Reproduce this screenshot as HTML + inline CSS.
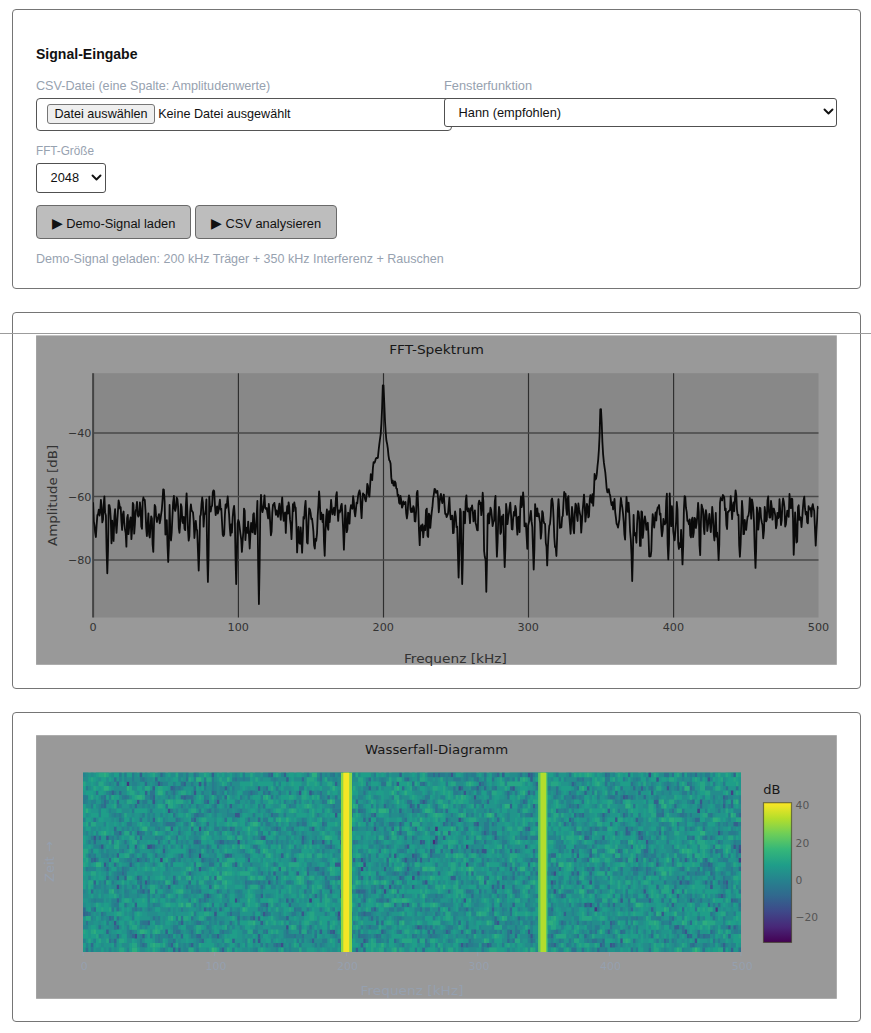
<!DOCTYPE html>
<html lang="de">
<head>
<meta charset="utf-8">
<title>FFT-Spektrum Analyse</title>
<style>
*{box-sizing:border-box}
html,body{margin:0;padding:0;background:#fff}
body{width:871px;height:1033px;position:relative;overflow:hidden;font-family:"Liberation Sans",sans-serif;color:#111}
.card{position:absolute;left:12px;width:849px;border:1px solid #757575;border-radius:4px;background:#fff}
#c1{top:9px;height:280px}
#c2{top:312px;height:377px}
#c3{top:712px;height:310px}
.hair{position:absolute;left:0;top:333px;width:871px;height:1px;background:#9c9c9c}
h2{position:absolute;left:23px;top:35.2px;margin:0;font-size:15px;line-height:18px;font-weight:bold;color:#111;white-space:nowrap;transform-origin:0 50%}
label,.status{position:absolute;margin:0;font-size:13px;line-height:16px;color:#97a2b0;white-space:nowrap;transform-origin:0 50%}
.file{position:absolute;left:23px;top:88px;width:416px;height:33px;border:1px solid #555;border-radius:4px;background:#fff;font-size:12.6px}
.fbtn{position:absolute;left:10px;top:5px;width:108px;height:20px;border:1px solid #767676;border-radius:3px;background:#efefef;color:#111;font-size:12.6px;line-height:18.6px;text-align:center;white-space:nowrap}
.ftxt{position:absolute;left:121.2px;top:5px;line-height:21.4px;color:#111;white-space:nowrap}
.sel{position:absolute;border:1px solid #505050;border-radius:3px;background:#fff;font-size:12.8px;color:#111;white-space:nowrap}
.sel span{position:absolute;left:13.6px;top:0}
.sel svg{position:absolute}
.btn{position:absolute;top:195px;height:34px;border:1px solid #6a6a6a;border-radius:4px;background:#bdbdbd;color:#111;font-size:12.85px;line-height:32px;text-align:center;white-space:nowrap;padding:1.6px 0 0 0;font-family:inherit}
.btn i{font-style:normal;font-size:13.7px;line-height:1}
.chart{position:absolute;display:block}
.chart text{font-family:"DejaVu Sans","Liberation Sans",sans-serif}
</style>
</head>
<body>
<div class="card" id="c1">
  <h2 style="transform:scaleX(.937)">Signal-Eingabe</h2>
  <label style="left:23px;top:68px;transform:scaleX(.9706)" id="l1">CSV-Datei (eine Spalte: Amplitudenwerte)</label>
  <div class="file"><div class="fbtn">Datei auswählen</div><div class="ftxt">Keine Datei ausgewählt</div></div>
  <label style="left:431px;top:68px;transform:scaleX(.982)" id="l2">Fensterfunktion</label>
  <div class="sel" style="left:431px;top:88px;width:393px;height:29px;line-height:27.4px"><span>Hann (empfohlen)</span>
    <svg style="right:2px;top:9px" width="11" height="8" viewBox="0 0 11 8"><path d="M1.5 1.5 L5.5 5.5 L9.5 1.5" fill="none" stroke="#111" stroke-width="1.9" stroke-linecap="round" stroke-linejoin="round"/></svg></div>
  <label style="left:23px;top:133px;transform:scaleX(.902)" id="l3">FFT-Größe</label>
  <div class="sel" style="left:23px;top:153px;width:70px;height:30px;line-height:28px"><span>2048</span>
    <svg style="right:2.6px;top:9.6px" width="11" height="8" viewBox="0 0 11 8"><path d="M1.5 1.5 L5.5 5.5 L9.5 1.5" fill="none" stroke="#111" stroke-width="1.9" stroke-linecap="round" stroke-linejoin="round"/></svg></div>
  <button class="btn" style="left:23px;width:155px"><i>▶</i> Demo-Signal laden</button>
  <button class="btn" style="left:182px;width:142px"><i>▶</i> CSV analysieren</button>
  <div class="status" style="left:23px;top:240.5px;transform:scaleX(.9643)" id="st">Demo-Signal geladen: 200 kHz Träger + 350 kHz Interferenz + Rauschen</div>
</div>
<div class="card" id="c2"></div>
<div class="card" id="c3"></div>
<div class="hair"></div>
<svg class="chart" style="left:36px;top:335px" width="802" height="331" viewBox="36 335 802 331">
<rect x="36.1" y="335.4" width="800.7" height="329.4" fill="#999"/>
<rect x="93.1" y="373.2" width="725.4" height="244.3" fill="#888"/>
<path d="M238.4 373.2V617.5M383.5 373.2V617.5M528.5 373.2V617.5M673.6 373.2V617.5" stroke="#2e2e2e" stroke-width="1.15" fill="none"/>
<path d="M93.1 433.0H818.5M93.1 496.5H818.5M93.1 560.0H818.5" stroke="#484848" stroke-width="1.6" fill="none"/>
<path d="M93.1 373.2V617.5" stroke="#444" stroke-width="2" fill="none"/>
<clipPath id="cp1"><rect x="93.1" y="373.2" width="725.4" height="244.3"/></clipPath>
<polyline clip-path="url(#cp1)" points="93.1,502.3 93.8,521.3 94.5,525.7 95.2,532.9 95.9,537.0 96.6,525.4 97.4,514.9 98.1,513.9 98.8,509.6 99.5,515.6 100.2,512.0 100.9,499.8 101.6,507.9 102.3,522.4 103.0,519.6 103.7,504.5 104.4,496.4 105.1,512.4 105.9,515.6 106.6,550.8 107.3,573.3 108.0,550.8 108.7,505.1 109.4,505.2 110.1,508.8 110.8,519.6 111.5,543.3 112.2,520.6 112.9,530.7 113.6,540.9 114.4,516.4 115.1,509.2 115.8,523.5 116.5,532.9 117.2,522.2 117.9,511.7 118.6,500.5 119.3,503.8 120.0,508.7 120.7,507.3 121.4,520.9 122.1,530.0 122.9,514.3 123.6,511.5 124.3,523.2 125.0,529.5 125.7,533.1 126.4,546.7 127.1,518.2 127.8,515.0 128.5,534.1 129.2,527.0 129.9,521.2 130.6,517.4 131.4,539.1 132.1,529.2 132.8,502.9 133.5,504.8 134.2,533.7 134.9,524.4 135.6,511.3 136.3,508.7 137.0,501.8 137.7,514.9 138.4,516.6 139.1,515.1 139.9,502.3 140.6,508.7 141.3,526.4 142.0,528.8 142.7,501.3 143.4,497.5 144.1,500.1 144.8,500.0 145.5,510.8 146.2,527.8 146.9,536.1 147.6,525.7 148.4,513.4 149.1,534.8 149.8,537.5 150.5,526.4 151.2,516.3 151.9,518.5 152.6,544.5 153.3,551.9 154.0,524.2 154.7,505.0 155.4,506.7 156.1,515.9 156.9,522.0 157.6,518.9 158.3,516.6 159.0,514.1 159.7,523.3 160.4,519.9 161.1,514.7 161.8,509.8 162.5,500.6 163.2,489.4 163.9,489.8 164.6,501.3 165.4,534.5 166.1,532.0 166.8,520.2 167.5,545.1 168.2,561.9 168.9,545.1 169.6,504.9 170.3,532.3 171.0,540.5 171.7,532.3 172.4,517.1 173.1,502.5 173.9,496.0 174.6,508.8 175.3,510.9 176.0,507.0 176.7,497.7 177.4,499.1 178.1,506.8 178.8,528.2 179.5,532.8 180.2,523.5 180.9,504.2 181.6,507.0 182.4,521.4 183.1,523.1 183.8,517.0 184.5,528.8 185.2,530.1 185.9,505.1 186.6,493.3 187.3,510.2 188.0,529.8 188.7,540.7 189.4,536.0 190.2,511.6 190.9,504.3 191.6,510.3 192.3,511.5 193.0,512.4 193.7,520.9 194.4,538.0 195.1,529.5 195.8,520.9 196.5,528.4 197.2,530.8 197.9,549.4 198.7,570.5 199.4,549.4 200.1,516.3 200.8,514.6 201.5,504.2 202.2,497.5 202.9,502.5 203.6,526.7 204.3,514.9 205.0,513.8 205.7,510.0 206.4,499.4 207.2,555.1 207.9,581.9 208.6,555.1 209.3,496.7 210.0,509.2 210.7,511.5 211.4,506.9 212.1,505.7 212.8,492.4 213.5,490.4 214.2,491.2 214.9,504.8 215.7,515.1 216.4,508.8 217.1,506.3 217.8,513.6 218.5,511.1 219.2,504.9 219.9,499.6 220.6,509.5 221.3,508.7 222.0,521.7 222.7,534.5 223.4,536.0 224.2,534.3 224.9,515.0 225.6,504.5 226.3,507.9 227.0,502.9 227.7,496.5 228.4,506.4 229.1,514.5 229.8,527.8 230.5,535.6 231.2,524.3 231.9,532.6 232.7,517.1 233.4,509.7 234.1,505.8 234.8,516.4 235.5,556.2 236.2,584.1 236.9,556.2 237.6,523.7 238.3,520.0 239.0,521.9 239.7,527.6 240.4,533.5 241.2,539.3 241.9,551.9 242.6,541.4 243.3,532.2 244.0,508.6 244.7,510.7 245.4,540.1 246.1,530.5 246.8,527.6 247.5,532.9 248.2,521.6 248.9,533.6 249.7,548.5 250.4,534.3 251.1,522.8 251.8,525.8 252.5,532.4 253.2,514.5 253.9,513.2 254.6,533.9 255.3,534.0 256.0,525.7 256.7,516.3 257.4,501.0 258.2,566.2 258.9,604.1 259.6,566.2 260.3,510.2 261.0,494.9 261.7,507.1 262.4,512.2 263.1,509.2 263.8,503.8 264.5,495.3 265.2,507.9 265.9,508.9 266.7,508.0 267.4,513.3 268.1,518.5 268.8,503.9 269.5,511.0 270.2,523.2 270.9,535.3 271.6,531.6 272.3,512.8 273.0,504.9 273.7,504.2 274.4,502.9 275.2,509.0 275.9,514.8 276.6,510.5 277.3,512.3 278.0,516.8 278.7,508.7 279.4,503.6 280.1,513.8 280.8,519.9 281.5,505.5 282.2,497.4 283.0,512.8 283.7,520.9 284.4,514.0 285.1,512.5 285.8,532.9 286.5,515.4 287.2,506.2 287.9,513.6 288.6,502.4 289.3,507.1 290.0,519.4 290.7,524.6 291.5,539.1 292.2,522.4 292.9,504.2 293.6,511.1 294.3,502.5 295.0,506.8 295.7,507.8 296.4,524.6 297.1,552.4 297.8,538.5 298.5,526.9 299.2,542.7 300.0,543.8 300.7,527.5 301.4,538.1 302.1,552.6 302.8,536.1 303.5,516.8 304.2,518.6 304.9,506.8 305.6,500.9 306.3,518.1 307.0,542.5 307.7,543.6 308.5,521.7 309.2,508.4 309.9,509.5 310.6,512.9 311.3,519.1 312.0,518.4 312.7,524.0 313.4,531.5 314.1,545.4 314.8,548.6 315.5,538.9 316.2,540.9 317.0,533.7 317.7,515.7 318.4,505.1 319.1,491.3 319.8,500.5 320.5,519.3 321.2,512.7 321.9,515.7 322.6,522.2 323.3,514.7 324.0,542.0 324.7,555.8 325.5,529.9 326.2,516.6 326.9,509.4 327.6,526.5 328.3,529.8 329.0,511.2 329.7,522.1 330.4,512.8 331.1,499.9 331.8,508.4 332.5,514.3 333.2,509.8 334.0,507.8 334.7,515.2 335.4,507.5 336.1,495.6 336.8,492.2 337.5,510.0 338.2,520.9 338.9,510.3 339.6,512.5 340.3,511.0 341.0,506.0 341.7,503.9 342.5,515.8 343.2,530.8 343.9,549.7 344.6,530.2 345.3,505.5 346.0,518.4 346.7,532.2 347.4,529.6 348.1,512.6 348.8,514.5 349.5,523.7 350.2,510.5 351.0,505.2 351.7,506.9 352.4,508.7 353.1,496.2 353.8,501.2 354.5,511.7 355.2,516.4 355.9,510.0 356.6,502.7 357.3,503.4 358.0,496.7 358.7,493.0 359.5,490.4 360.2,493.8 360.9,508.0 361.6,518.1 362.3,503.1 363.0,493.4 363.7,494.3 364.4,495.0 365.1,499.2 365.8,501.3 366.5,496.4 367.3,483.8 368.0,486.1 368.7,494.3 369.4,496.7 370.1,486.0 370.8,474.1 371.5,477.6 372.2,480.1 372.9,468.1 373.6,462.2 374.3,462.9 375.0,461.8 375.8,458.8 376.5,457.9 377.2,458.1 377.9,457.7 378.6,450.5 379.3,444.4 380.0,439.0 380.7,434.1 381.4,423.6 382.1,407.9 382.8,385.4 383.5,385.4 384.3,403.6 385.0,421.0 385.7,432.2 386.4,440.5 387.1,443.7 387.8,448.4 388.5,455.6 389.2,460.0 389.9,461.0 390.6,463.8 391.3,477.4 392.0,483.1 392.8,480.6 393.5,485.4 394.2,485.7 394.9,481.4 395.6,482.9 396.3,488.5 397.0,488.8 397.7,496.0 398.4,494.7 399.1,502.7 399.8,503.9 400.5,495.8 401.3,501.0 402.0,507.7 402.7,506.0 403.4,501.5 404.1,504.2 404.8,503.6 405.5,502.0 406.2,513.4 406.9,518.5 407.6,513.5 408.3,500.4 409.0,495.5 409.8,498.4 410.5,509.6 411.2,512.2 411.9,508.4 412.6,511.9 413.3,506.1 414.0,508.1 414.7,521.2 415.4,521.5 416.1,511.6 416.8,493.1 417.5,490.8 418.3,509.3 419.0,530.9 419.7,545.2 420.4,529.2 421.1,525.3 421.8,530.5 422.5,524.5 423.2,537.4 423.9,530.5 424.6,525.7 425.3,530.1 426.0,510.1 426.8,508.6 427.5,535.8 428.2,537.0 428.9,513.6 429.6,515.5 430.3,527.9 431.0,519.5 431.7,512.4 432.4,507.2 433.1,498.6 433.8,494.6 434.5,489.0 435.3,489.4 436.0,492.8 436.7,491.6 437.4,490.9 438.1,498.5 438.8,512.3 439.5,502.9 440.2,496.9 440.9,493.9 441.6,499.6 442.3,503.0 443.0,498.7 443.8,494.6 444.5,505.1 445.2,514.0 445.9,513.7 446.6,517.1 447.3,515.3 448.0,513.9 448.7,505.6 449.4,497.6 450.1,512.8 450.8,519.4 451.5,516.0 452.3,515.7 453.0,533.1 453.7,532.8 454.4,517.8 455.1,511.3 455.8,516.4 456.5,527.1 457.2,526.5 457.9,552.9 458.6,577.5 459.3,552.9 460.1,508.8 460.8,512.0 461.5,556.2 462.2,584.1 462.9,556.2 463.6,511.6 464.3,517.7 465.0,523.3 465.7,501.0 466.4,495.3 467.1,509.3 467.8,511.4 468.6,508.4 469.3,513.1 470.0,523.2 470.7,508.1 471.4,509.7 472.1,505.4 472.8,512.0 473.5,521.4 474.2,515.1 474.9,510.3 475.6,522.9 476.3,525.6 477.1,530.2 477.8,530.3 478.5,503.7 479.2,500.6 479.9,504.1 480.6,502.7 481.3,515.2 482.0,507.5 482.7,492.7 483.4,502.0 484.1,551.0 484.8,556.8 485.6,560.0 486.3,591.8 487.0,560.0 487.7,515.6 488.4,513.3 489.1,523.4 489.8,515.5 490.5,507.7 491.2,510.0 491.9,517.0 492.6,526.1 493.3,522.5 494.1,520.6 494.8,501.5 495.5,496.0 496.2,534.2 496.9,556.7 497.6,541.9 498.3,517.4 499.0,507.0 499.7,511.1 500.4,533.8 501.1,532.1 501.8,516.4 502.6,524.4 503.3,514.7 504.0,547.6 504.7,567.0 505.4,547.6 506.1,504.0 506.8,510.0 507.5,524.1 508.2,517.3 508.9,513.3 509.6,507.4 510.3,502.6 511.1,515.6 511.8,529.2 512.5,529.5 513.2,518.1 513.9,511.9 514.6,515.7 515.3,505.9 516.0,509.2 516.7,524.7 517.4,534.6 518.1,517.2 518.8,516.7 519.6,532.1 520.3,506.9 521.0,496.3 521.7,507.0 522.4,503.3 523.1,492.4 523.8,501.1 524.5,526.1 525.2,526.4 525.9,523.3 526.6,535.9 527.3,548.8 528.1,525.5 528.8,522.7 529.5,520.7 530.2,515.2 530.9,510.8 531.6,521.4 532.3,527.2 533.0,548.9 533.7,569.5 534.4,548.9 535.1,504.1 535.8,511.7 536.6,516.1 537.3,508.3 538.0,516.3 538.7,513.6 539.4,518.1 540.1,522.8 540.8,538.7 541.5,532.2 542.2,511.1 542.9,512.9 543.6,520.9 544.3,523.4 545.1,524.0 545.8,542.8 546.5,546.8 547.2,565.4 547.9,546.8 548.6,534.7 549.3,525.8 550.0,524.0 550.7,515.8 551.4,500.1 552.1,498.5 552.9,504.2 553.6,518.4 554.3,537.3 555.0,547.0 555.7,546.9 556.4,556.0 557.1,538.7 557.8,510.3 558.5,499.1 559.2,509.6 559.9,527.9 560.6,526.3 561.4,527.3 562.1,517.2 562.8,515.8 563.5,502.6 564.2,492.0 564.9,493.7 565.6,493.9 566.3,508.6 567.0,514.9 567.7,498.2 568.4,496.2 569.1,514.1 569.9,524.3 570.6,533.8 571.3,519.6 572.0,507.0 572.7,514.1 573.4,529.2 574.1,533.3 574.8,513.7 575.5,503.7 576.2,505.4 576.9,515.4 577.6,521.0 578.4,503.5 579.1,509.2 579.8,513.1 580.5,516.0 581.2,532.6 581.9,522.5 582.6,511.2 583.3,502.8 584.0,494.6 584.7,505.2 585.4,521.7 586.1,514.3 586.9,503.8 587.6,506.2 588.3,517.4 589.0,516.3 589.7,500.3 590.4,495.2 591.1,501.6 591.8,502.7 592.5,494.1 593.2,505.8 593.9,492.9 594.6,473.9 595.4,479.6 596.1,478.5 596.8,474.2 597.5,466.0 598.2,459.6 598.9,449.7 599.6,435.5 600.3,409.4 601.0,409.2 601.7,422.5 602.4,442.0 603.1,454.1 603.9,462.7 604.6,467.7 605.3,472.3 606.0,480.0 606.7,488.7 607.4,492.4 608.1,491.7 608.8,489.1 609.5,493.5 610.2,495.6 610.9,501.4 611.6,505.1 612.4,502.2 613.1,509.5 613.8,504.3 614.5,498.8 615.2,512.1 615.9,517.7 616.6,523.8 617.3,525.0 618.0,527.6 618.7,523.6 619.4,519.5 620.1,508.4 620.9,497.9 621.6,503.2 622.3,507.3 623.0,513.3 623.7,521.8 624.4,534.3 625.1,539.7 625.8,514.8 626.5,496.9 627.2,506.0 627.9,511.9 628.6,502.7 629.4,515.3 630.1,531.5 630.8,539.1 631.5,554.6 632.2,581.0 632.9,554.6 633.6,514.9 634.3,535.4 635.0,532.8 635.7,534.1 636.4,542.8 637.1,524.0 637.9,511.2 638.6,512.0 639.3,519.4 640.0,545.9 640.7,545.9 641.4,511.4 642.1,512.1 642.8,537.9 643.5,529.7 644.2,520.1 644.9,516.3 645.7,521.9 646.4,529.8 647.1,524.7 647.8,522.8 648.5,535.8 649.2,556.4 649.9,556.5 650.6,556.3 651.3,551.2 652.0,527.5 652.7,514.1 653.4,519.6 654.2,527.7 654.9,518.4 655.6,512.3 656.3,520.5 657.0,510.8 657.7,507.4 658.4,507.2 659.1,505.0 659.8,514.7 660.5,513.6 661.2,527.3 661.9,536.3 662.7,530.7 663.4,518.9 664.1,524.0 664.8,524.4 665.5,523.1 666.2,501.1 666.9,493.7 667.6,543.8 668.3,559.4 669.0,543.8 669.7,493.3 670.4,511.0 671.2,526.1 671.9,506.1 672.6,513.7 673.3,531.7 674.0,536.9 674.7,540.3 675.4,530.9 676.1,521.6 676.8,502.0 677.5,509.7 678.2,543.0 678.9,549.0 679.7,543.2 680.4,547.2 681.1,529.8 681.8,546.3 682.5,564.4 683.2,546.3 683.9,509.5 684.6,496.1 685.3,497.1 686.0,508.0 686.7,511.9 687.4,520.9 688.2,521.2 688.9,524.3 689.6,519.3 690.3,535.5 691.0,537.3 691.7,519.7 692.4,517.7 693.1,537.2 693.8,532.3 694.5,517.8 695.2,518.9 695.9,528.0 696.7,523.2 697.4,514.8 698.1,502.9 698.8,512.2 699.5,545.5 700.2,555.1 700.9,522.2 701.6,504.6 702.3,507.4 703.0,509.6 703.7,526.3 704.4,534.1 705.2,514.4 705.9,510.1 706.6,515.1 707.3,531.0 708.0,525.4 708.7,520.2 709.4,513.9 710.1,524.2 710.8,532.1 711.5,521.8 712.2,506.8 712.9,514.8 713.7,532.8 714.4,540.5 715.1,528.1 715.8,512.9 716.5,536.6 717.2,532.6 717.9,544.1 718.6,560.0 719.3,544.1 720.0,502.9 720.7,497.9 721.4,498.9 722.2,500.4 722.9,494.9 723.6,495.9 724.3,497.7 725.0,510.1 725.7,508.5 726.4,525.0 727.1,529.0 727.8,511.8 728.5,511.9 729.2,510.4 730.0,509.9 730.7,496.1 731.4,505.7 732.1,519.2 732.8,507.6 733.5,502.3 734.2,511.3 734.9,499.4 735.6,490.3 736.3,495.2 737.0,510.1 737.7,515.2 738.5,514.9 739.2,545.5 739.9,556.8 740.6,544.4 741.3,522.2 742.0,501.0 742.7,510.7 743.4,534.1 744.1,534.0 744.8,520.0 745.5,528.1 746.2,529.8 747.0,521.1 747.7,516.5 748.4,515.9 749.1,511.2 749.8,497.9 750.5,502.9 751.2,518.6 751.9,499.3 752.6,502.7 753.3,509.4 754.0,522.0 754.7,548.1 755.5,567.9 756.2,548.1 756.9,507.5 757.6,513.0 758.3,529.6 759.0,521.1 759.7,507.7 760.4,508.3 761.1,518.5 761.8,522.2 762.5,525.1 763.2,538.3 764.0,530.4 764.7,507.0 765.4,513.5 766.1,521.4 766.8,519.6 767.5,500.5 768.2,496.3 768.9,511.5 769.6,517.6 770.3,517.5 771.0,500.8 771.7,506.3 772.5,519.7 773.2,508.6 773.9,508.7 774.6,511.7 775.3,515.8 776.0,528.3 776.7,525.1 777.4,512.9 778.1,518.3 778.8,517.1 779.5,499.2 780.2,510.5 781.0,525.0 781.7,520.4 782.4,504.5 783.1,498.5 783.8,501.7 784.5,507.5 785.2,526.5 785.9,524.4 786.6,516.9 787.3,510.6 788.0,514.1 788.7,516.9 789.5,494.0 790.2,506.1 790.9,508.2 791.6,498.6 792.3,499.0 793.0,518.1 793.7,554.8 794.4,536.9 795.1,512.5 795.8,524.4 796.5,542.5 797.2,541.4 798.0,507.0 798.7,505.3 799.4,519.9 800.1,517.0 800.8,517.9 801.5,527.1 802.2,518.3 802.9,508.1 803.6,500.2 804.3,496.7 805.0,508.2 805.7,514.5 806.5,511.8 807.2,522.5 807.9,523.3 808.6,506.1 809.3,509.6 810.0,508.4 810.7,508.1 811.4,516.6 812.1,506.9 812.8,504.1 813.5,508.6 814.2,510.7 815.0,529.7 815.7,545.7 816.4,531.2 817.1,520.0 817.8,506.7 818.5,509.1" fill="none" stroke="#0a0a0a" stroke-width="1.8" stroke-linejoin="round"/>
<text x="436.6" y="353.8" font-size="13" fill="#171717" text-anchor="middle" textLength="94.8" lengthAdjust="spacingAndGlyphs">FFT-Spektrum</text>
<text x="93.1" y="630.7" font-size="11.2" fill="#333" text-anchor="middle">0</text>
<text x="238.2" y="630.7" font-size="11.2" fill="#333" text-anchor="middle">100</text>
<text x="383.3" y="630.7" font-size="11.2" fill="#333" text-anchor="middle">200</text>
<text x="528.3" y="630.7" font-size="11.2" fill="#333" text-anchor="middle">300</text>
<text x="673.4" y="630.7" font-size="11.2" fill="#333" text-anchor="middle">400</text>
<text x="818.5" y="630.7" font-size="11.2" fill="#333" text-anchor="middle">500</text>
<text x="91.5" y="437.0" font-size="11.2" fill="#333" text-anchor="end">−40</text>
<text x="91.5" y="500.5" font-size="11.2" fill="#333" text-anchor="end">−60</text>
<text x="91.5" y="564.0" font-size="11.2" fill="#333" text-anchor="end">−80</text>
<text x="455.4" y="662.5" font-size="13" fill="#333" text-anchor="middle" textLength="103" lengthAdjust="spacingAndGlyphs">Frequenz [kHz]</text>
<text transform="translate(56.5 495.4) rotate(-90)" font-size="13" fill="#333" text-anchor="middle" textLength="101.3" lengthAdjust="spacingAndGlyphs">Amplitude [dB]</text>
</svg>
<svg class="chart" style="left:36px;top:735px" width="802" height="265" viewBox="36 735 802 265">
<rect x="36.1" y="735.2" width="800.7" height="263.6" fill="#999"/>
<defs><clipPath id="cp3"><rect x="83.1" y="772.7" width="657.9" height="179.3"/></clipPath></defs>
<rect x="83.1" y="772.7" width="657.9" height="179.3" fill="#23988b"/>
<g transform="translate(83.1 772.7) scale(2.56992 4.48250)" shape-rendering="geometricPrecision">
<rect width="256" height="40" fill="#21958b"/>
<path d="M136 15.5h1" stroke="#472c7a" stroke-width="1.02" fill="none"/>
<path d="M17 2.5h1M137 12.5h1M199 30.5h1M246 30.5h1" stroke="#443780" stroke-width="1.02" fill="none"/>
<path d="M252 4.5h1M239 8.5h1M149 16.5h1M45 18.5h1M30 19.5h1M255 19.5h1M108 21.5h1M88 28.5h1" stroke="#404185" stroke-width="1.02" fill="none"/>
<path d="M220 0.5h1M146 3.5h1M33 8.5h1M146 10.5h1M45 12.5h1M60 15.5h1M25 16.5h1M255 17.5h1M109 20.5h1M183 22.5h1M128 23.5h1M13 25.5h1M117 26.5h1M59 28.5h1M197 29.5h1M99 31.5h1M79 34.5h1M20 36.5h1M77 38.5h1" stroke="#3d4c89" stroke-width="1.02" fill="none"/>
<path d="M143 0.5h1M173 0.5h1M223 1.5h1M243 1.5h1M29 2.5h1M45 2.5h1M122 2.5h1M68 3.5h1M167 3.5h1M227 3.5h1M43 4.5h1M84 4.5h1M88 4.5h1M148 4.5h1M152 5.5h1M210 5.5h1M21 6.5h1M27 6.5h1M52 6.5h1M132 6.5h1M240 6.5h1M59 9.5h2M98 9.5h1M207 10.5h1M153 11.5h1M104 12.5h1M113 12.5h1M216 13.5h1M247 13.5h1M4 14.5h1M9 14.5h1M70 14.5h1M137 14.5h1M93 15.5h1M131 15.5h1M219 15.5h1M7 16.5h1M26 16.5h1M126 16.5h1M253 16.5h1M255 16.5h1M155 17.5h2M121 18.5h1M128 18.5h1M108 19.5h1M125 19.5h1M215 19.5h1M8 20.5h1M98 20.5h2M149 20.5h1M45 21.5h1M130 22.5h1M24 24.5h1M72 24.5h1M133 24.5h1M182 24.5h1M197 24.5h1M232 24.5h1M250 24.5h1M103 25.5h1M119 25.5h1M163 25.5h1M244 25.5h1M183 26.5h1M218 26.5h1M229 26.5h1M248 27.5h1M148 28.5h1M209 28.5h1M195 29.5h1M51 31.5h1M70 31.5h1M85 31.5h1M225 31.5h1M12 33.5h1M161 33.5h1M130 34.5h1M251 34.5h1M97 35.5h1M173 35.5h1M234 35.5h1M174 36.5h1M68 37.5h1M109 37.5h1M209 37.5h1M238 37.5h1M147 38.5h1M205 38.5h1" stroke="#39568b" stroke-width="1.02" fill="none"/>
<path d="M22 0.5h1M50 0.5h1M73 0.5h1M78 0.5h1M123 0.5h1M163 0.5h1M174 0.5h1M253 0.5h1M79 1.5h1M174 1.5h1M39 2.5h1M98 2.5h1M154 2.5h1M190 2.5h1M27 3.5h1M34 3.5h1M55 3.5h1M102 3.5h1M111 3.5h1M153 3.5h1M196 3.5h1M217 3.5h1M11 4.5h1M24 4.5h1M173 4.5h1M195 4.5h1M221 4.5h1M27 5.5h1M39 5.5h1M211 5.5h1M249 5.5h1M48 6.5h1M222 6.5h2M57 7.5h1M127 7.5h1M130 7.5h1M166 7.5h1M175 7.5h1M178 7.5h1M249 7.5h1M123 8.5h1M204 8.5h1M113 9.5h1M202 9.5h1M27 10.5h1M43 10.5h1M111 10.5h1M189 10.5h1M215 10.5h1M123 11.5h1M253 11.5h2M34 12.5h1M89 12.5h1M173 12.5h1M211 12.5h1M14 13.5h1M21 13.5h1M123 13.5h1M142 13.5h1M156 13.5h1M211 13.5h1M69 14.5h1M85 14.5h1M140 14.5h1M160 14.5h1M195 14.5h1M202 14.5h1M217 14.5h1M44 15.5h1M53 15.5h1M89 15.5h1M100 15.5h1M132 15.5h1M137 15.5h1M20 16.5h1M172 16.5h1M31 17.5h1M135 17.5h1M143 17.5h1M190 17.5h1M13 18.5h1M56 18.5h1M77 18.5h1M192 18.5h1M197 18.5h1M4 19.5h1M21 19.5h1M64 19.5h1M82 19.5h1M105 19.5h1M131 19.5h1M234 19.5h1M18 20.5h1M59 20.5h1M223 20.5h1M243 20.5h1M117 21.5h1M126 21.5h1M74 22.5h1M83 22.5h1M180 22.5h1M192 22.5h1M13 23.5h1M16 23.5h1M21 23.5h1M51 23.5h1M123 23.5h1M143 23.5h2M4 24.5h1M35 24.5h1M156 24.5h1M33 25.5h1M128 25.5h1M159 25.5h1M23 26.5h1M96 26.5h1M107 26.5h1M48 27.5h1M69 27.5h1M100 27.5h1M177 27.5h1M186 27.5h1M231 27.5h1M13 28.5h1M79 28.5h1M220 28.5h1M236 28.5h1M252 28.5h1M20 29.5h1M71 29.5h1M126 29.5h1M167 29.5h1M229 29.5h1M47 30.5h1M113 30.5h1M159 30.5h1M221 30.5h1M0 31.5h1M109 31.5h1M187 31.5h1M66 32.5h1M68 32.5h1M79 32.5h1M99 32.5h1M25 33.5h1M38 33.5h1M69 33.5h1M205 33.5h1M13 34.5h1M230 34.5h2M253 34.5h1M9 35.5h1M32 35.5h1M92 35.5h1M96 35.5h1M102 35.5h1M116 35.5h1M141 35.5h1M166 35.5h1M204 35.5h1M23 36.5h1M52 36.5h1M68 36.5h1M235 36.5h1M58 37.5h1M89 37.5h1M101 37.5h1M178 37.5h1M34 38.5h1M42 38.5h1M108 38.5h1M157 38.5h1M183 38.5h1M201 38.5h1M206 38.5h1M249 38.5h1M35 39.5h1M37 39.5h1M54 39.5h1M106 39.5h1M252 39.5h1" stroke="#34608d" stroke-width="1.02" fill="none"/>
<path d="M30 0.5h1M72 0.5h1M136 0.5h1M138 0.5h1M161 0.5h1M203 0.5h1M212 0.5h1M238 0.5h1M28 1.5h1M85 1.5h1M111 1.5h1M126 1.5h1M13 2.5h1M24 2.5h1M47 2.5h1M128 2.5h1M132 2.5h1M176 2.5h1M35 3.5h1M103 3.5h1M124 3.5h1M147 3.5h1M156 3.5h1M166 3.5h1M214 3.5h1M236 3.5h1M14 4.5h1M50 4.5h1M65 4.5h1M72 4.5h1M165 4.5h1M207 4.5h1M216 4.5h1M38 5.5h1M55 5.5h1M95 5.5h1M190 5.5h1M218 5.5h1M8 6.5h1M13 6.5h1M42 6.5h1M106 6.5h1M157 6.5h1M171 6.5h1M237 6.5h1M252 6.5h1M8 7.5h1M20 7.5h1M117 7.5h1M192 7.5h1M230 7.5h1M240 7.5h1M252 7.5h1M107 8.5h1M128 8.5h1M141 8.5h1M184 8.5h1M44 9.5h1M73 9.5h1M174 9.5h1M178 9.5h2M191 9.5h1M194 9.5h1M210 9.5h1M225 9.5h1M255 9.5h1M68 10.5h1M109 10.5h1M141 10.5h1M161 10.5h1M238 10.5h2M93 11.5h1M140 11.5h1M152 11.5h1M187 11.5h1M12 12.5h1M57 12.5h1M75 12.5h1M120 12.5h1M129 12.5h1M172 12.5h1M160 13.5h1M207 13.5h1M212 13.5h1M224 13.5h1M6 14.5h1M22 14.5h1M102 14.5h1M172 14.5h1M196 14.5h1M216 14.5h1M237 14.5h1M4 15.5h1M43 15.5h1M54 15.5h1M85 15.5h1M27 16.5h1M96 16.5h1M213 16.5h1M41 17.5h1M151 17.5h1M153 17.5h1M166 17.5h1M168 17.5h1M175 17.5h1M177 17.5h1M197 17.5h1M208 17.5h1M218 17.5h2M246 17.5h1M38 18.5h1M55 18.5h1M57 18.5h1M129 18.5h1M135 18.5h1M182 18.5h2M3 19.5h1M10 19.5h1M46 19.5h1M118 19.5h1M129 19.5h1M174 19.5h1M191 19.5h1M196 19.5h1M229 19.5h1M242 19.5h1M12 20.5h1M164 20.5h1M173 20.5h1M244 20.5h1M9 21.5h1M76 21.5h1M90 21.5h2M166 21.5h1M185 21.5h1M198 21.5h1M215 21.5h1M255 21.5h1M15 22.5h1M41 22.5h1M87 22.5h1M93 22.5h1M102 22.5h1M125 22.5h1M138 22.5h1M151 22.5h1M190 22.5h1M197 22.5h1M222 22.5h1M244 22.5h1M9 23.5h1M35 23.5h1M75 23.5h1M99 23.5h1M102 23.5h1M108 23.5h1M167 23.5h1M41 24.5h1M120 24.5h1M161 24.5h1M192 24.5h1M235 24.5h1M242 24.5h1M244 24.5h1M249 24.5h1M22 25.5h1M49 25.5h1M95 25.5h1M102 25.5h1M116 25.5h1M223 25.5h1M250 25.5h1M3 26.5h1M25 26.5h1M100 26.5h1M106 26.5h1M108 26.5h2M113 26.5h1M142 26.5h1M160 26.5h1M90 27.5h1M102 27.5h1M124 27.5h1M151 27.5h1M219 27.5h1M81 28.5h1M109 28.5h1M118 28.5h1M253 28.5h1M55 29.5h1M80 29.5h1M101 29.5h1M107 29.5h1M121 29.5h1M124 29.5h1M196 29.5h1M206 29.5h1M243 29.5h1M0 30.5h1M4 30.5h1M53 30.5h1M149 30.5h1M166 30.5h1M182 30.5h1M213 30.5h1M233 30.5h1M1 31.5h1M57 31.5h1M10 32.5h1M60 32.5h1M112 32.5h1M160 32.5h1M169 32.5h1M229 32.5h1M114 33.5h1M116 33.5h1M146 33.5h1M160 33.5h1M186 33.5h1M236 33.5h1M131 34.5h1M134 35.5h1M136 35.5h1M147 35.5h1M152 35.5h1M155 35.5h1M209 35.5h1M244 35.5h1M13 36.5h1M19 36.5h1M38 36.5h1M44 36.5h2M107 36.5h1M114 36.5h1M168 36.5h1M182 36.5h1M195 36.5h1M221 36.5h1M236 36.5h1M239 36.5h1M241 36.5h1M251 36.5h1M12 37.5h1M46 37.5h1M66 37.5h1M99 37.5h1M121 37.5h1M165 37.5h1M174 37.5h1M202 37.5h1M226 37.5h1M3 38.5h1M23 38.5h1M75 38.5h1M149 38.5h1M158 38.5h1M237 38.5h1M109 39.5h1M132 39.5h1M200 39.5h1M249 39.5h1" stroke="#30698e" stroke-width="1.02" fill="none"/>
<path d="M43 0.5h1M92 0.5h1M97 0.5h1M156 0.5h1M170 0.5h1M189 0.5h1M204 0.5h1M226 0.5h2M229 0.5h1M233 0.5h1M12 1.5h1M23 1.5h1M40 1.5h1M59 1.5h1M92 1.5h1M125 1.5h1M153 1.5h1M159 1.5h1M192 1.5h1M194 1.5h1M30 2.5h1M38 2.5h1M110 2.5h1M116 2.5h2M131 2.5h1M155 2.5h1M203 2.5h1M213 2.5h1M235 2.5h1M37 3.5h1M43 3.5h1M71 3.5h1M101 3.5h1M144 3.5h1M160 3.5h1M184 3.5h1M192 3.5h1M209 3.5h1M221 3.5h1M231 3.5h1M250 3.5h1M254 3.5h1M5 4.5h1M26 4.5h2M35 4.5h1M51 4.5h1M70 4.5h1M80 4.5h1M92 4.5h1M109 4.5h1M175 4.5h1M184 4.5h1M189 4.5h1M8 5.5h1M16 5.5h1M26 5.5h1M40 5.5h3M73 5.5h1M98 5.5h1M165 5.5h1M191 5.5h1M205 5.5h2M213 5.5h1M250 5.5h1M47 6.5h1M82 6.5h1M93 6.5h1M126 6.5h2M131 6.5h1M133 6.5h1M172 6.5h1M178 6.5h1M194 6.5h1M209 6.5h1M249 6.5h1M7 7.5h1M32 7.5h1M51 7.5h1M70 7.5h1M97 7.5h1M128 7.5h1M137 7.5h1M155 7.5h1M189 7.5h1M214 7.5h1M223 7.5h1M49 8.5h1M101 8.5h1M104 8.5h1M108 8.5h1M130 8.5h1M137 8.5h1M225 8.5h1M229 8.5h1M35 9.5h1M43 9.5h1M112 9.5h1M160 9.5h1M193 9.5h1M223 9.5h2M232 9.5h2M244 9.5h1M4 10.5h1M14 10.5h1M22 10.5h1M36 10.5h1M42 10.5h1M55 10.5h1M64 10.5h1M125 10.5h1M179 10.5h1M202 10.5h1M32 11.5h4M48 11.5h1M83 11.5h1M85 11.5h2M119 11.5h2M127 11.5h1M143 11.5h1M159 11.5h1M176 11.5h1M190 11.5h1M205 11.5h1M231 11.5h1M42 12.5h1M58 12.5h1M81 12.5h1M123 12.5h1M149 12.5h1M197 12.5h1M199 12.5h1M241 12.5h1M22 13.5h1M37 13.5h1M60 13.5h1M101 13.5h1M159 13.5h1M193 13.5h1M197 13.5h1M217 13.5h1M36 14.5h1M118 14.5h1M125 14.5h1M128 14.5h1M235 14.5h1M242 14.5h1M244 14.5h1M11 15.5h1M16 15.5h1M29 15.5h1M45 15.5h1M105 15.5h1M114 15.5h1M152 15.5h1M156 15.5h1M199 15.5h1M247 15.5h1M17 16.5h1M48 16.5h1M52 16.5h1M66 16.5h2M95 16.5h1M118 16.5h1M125 16.5h1M191 16.5h1M219 16.5h1M245 16.5h1M68 17.5h1M115 17.5h1M136 17.5h1M139 17.5h1M209 17.5h1M244 17.5h1M2 18.5h1M28 18.5h1M41 18.5h1M119 18.5h1M218 18.5h1M237 18.5h1M248 18.5h1M24 19.5h1M35 19.5h1M52 19.5h1M81 19.5h1M109 19.5h1M208 19.5h2M211 19.5h1M220 19.5h1M43 20.5h1M49 20.5h2M74 20.5h1M118 20.5h1M155 20.5h1M184 20.5h1M202 20.5h1M229 20.5h1M241 20.5h2M15 21.5h1M87 21.5h1M168 21.5h1M196 21.5h1M204 21.5h1M209 21.5h1M214 21.5h1M219 21.5h1M233 21.5h1M239 21.5h1M244 21.5h1M69 22.5h1M107 22.5h1M114 22.5h1M121 22.5h1M167 22.5h1M176 22.5h1M182 22.5h1M219 22.5h1M235 22.5h1M238 22.5h1M94 23.5h1M98 23.5h1M115 23.5h1M124 23.5h1M157 23.5h1M163 23.5h1M173 23.5h1M231 23.5h1M233 23.5h1M245 23.5h1M249 23.5h1M8 24.5h1M22 24.5h1M63 24.5h1M68 24.5h1M87 24.5h1M95 24.5h1M132 24.5h1M171 24.5h1M183 24.5h1M226 24.5h1M234 24.5h1M247 24.5h1M40 25.5h1M69 25.5h1M161 25.5h1M167 25.5h1M194 25.5h1M204 25.5h1M230 25.5h1M22 26.5h1M45 26.5h1M52 26.5h1M86 26.5h1M103 26.5h1M122 26.5h1M149 26.5h2M154 26.5h1M167 26.5h2M196 26.5h1M233 26.5h1M255 26.5h1M47 27.5h1M109 27.5h1M137 27.5h1M187 27.5h1M247 27.5h1M249 27.5h1M45 28.5h1M47 28.5h1M115 28.5h2M212 28.5h1M225 28.5h1M240 28.5h1M254 28.5h1M16 29.5h1M50 29.5h1M70 29.5h1M162 29.5h1M200 29.5h1M204 29.5h1M247 29.5h1M255 29.5h1M13 30.5h1M20 30.5h1M49 30.5h1M82 30.5h1M112 30.5h1M131 30.5h1M138 30.5h1M142 30.5h1M200 30.5h1M238 30.5h1M2 31.5h1M7 31.5h1M71 31.5h1M108 31.5h1M110 31.5h2M137 31.5h1M166 31.5h1M177 31.5h1M244 31.5h1M11 32.5h1M13 32.5h1M27 32.5h1M38 32.5h1M42 32.5h1M65 32.5h1M123 32.5h1M215 32.5h1M239 32.5h1M245 32.5h1M1 33.5h1M23 33.5h2M44 33.5h2M57 33.5h1M174 33.5h1M192 33.5h1M206 33.5h1M228 33.5h1M6 34.5h1M12 34.5h1M84 34.5h1M88 34.5h1M111 34.5h1M133 34.5h1M135 34.5h1M149 34.5h1M205 34.5h1M233 34.5h1M18 35.5h1M36 35.5h2M42 35.5h1M54 35.5h1M71 35.5h1M79 35.5h1M84 35.5h1M107 35.5h1M123 35.5h1M142 35.5h1M151 35.5h1M165 35.5h1M184 35.5h1M197 35.5h1M199 35.5h1M210 35.5h1M233 35.5h1M239 35.5h1M33 36.5h1M82 36.5h1M85 36.5h1M90 36.5h1M104 36.5h1M108 36.5h2M115 36.5h1M128 36.5h1M135 36.5h1M165 36.5h1M192 36.5h1M242 36.5h2M10 37.5h1M35 37.5h1M110 37.5h1M130 37.5h1M133 37.5h1M150 37.5h1M167 37.5h1M198 37.5h2M214 37.5h1M245 37.5h1M74 38.5h1M76 38.5h1M124 38.5h1M155 38.5h1M182 38.5h1M202 38.5h1M236 38.5h1M1 39.5h1M190 39.5h2M194 39.5h1M213 39.5h1M220 39.5h1M241 39.5h1M255 39.5h1" stroke="#2d728e" stroke-width="1.02" fill="none"/>
<path d="M14 0.5h1M16 0.5h1M19 0.5h1M40 0.5h1M62 0.5h1M87 0.5h1M96 0.5h1M101 0.5h1M113 0.5h1M134 0.5h2M137 0.5h1M139 0.5h2M142 0.5h1M149 0.5h1M151 0.5h2M160 0.5h1M175 0.5h1M184 0.5h1M236 0.5h1M242 0.5h2M19 1.5h1M22 1.5h1M47 1.5h1M50 1.5h1M58 1.5h1M62 1.5h1M74 1.5h1M116 1.5h1M144 1.5h3M149 1.5h1M152 1.5h1M156 1.5h1M165 1.5h1M167 1.5h1M169 1.5h1M193 1.5h1M203 1.5h2M210 1.5h1M215 1.5h1M42 2.5h1M50 2.5h1M57 2.5h1M141 2.5h1M179 2.5h1M191 2.5h1M206 2.5h1M227 2.5h1M231 2.5h1M236 2.5h1M245 2.5h1M249 2.5h1M1 3.5h1M36 3.5h1M47 3.5h1M50 3.5h1M58 3.5h1M75 3.5h1M84 3.5h2M114 3.5h1M129 3.5h1M151 3.5h2M159 3.5h1M176 3.5h2M181 3.5h1M205 3.5h1M220 3.5h1M237 3.5h1M10 4.5h1M12 4.5h1M32 4.5h1M46 4.5h1M54 4.5h1M64 4.5h1M66 4.5h1M76 4.5h1M89 4.5h1M101 4.5h1M144 4.5h2M153 4.5h1M158 4.5h1M168 4.5h1M198 4.5h1M233 4.5h2M236 4.5h1M0 5.5h2M7 5.5h1M15 5.5h1M17 5.5h1M33 5.5h1M47 5.5h1M52 5.5h1M61 5.5h1M64 5.5h1M92 5.5h1M102 5.5h1M120 5.5h1M133 5.5h2M158 5.5h1M172 5.5h1M183 5.5h1M187 5.5h1M193 5.5h1M200 5.5h1M204 5.5h1M209 5.5h1M212 5.5h1M223 5.5h1M245 5.5h1M0 6.5h1M9 6.5h1M23 6.5h2M60 6.5h1M78 6.5h1M94 6.5h1M152 6.5h3M207 6.5h1M236 6.5h1M3 7.5h1M13 7.5h1M38 7.5h1M44 7.5h1M68 7.5h1M80 7.5h1M107 7.5h1M112 7.5h1M147 7.5h1M152 7.5h1M170 7.5h1M179 7.5h1M190 7.5h1M251 7.5h1M19 8.5h1M26 8.5h1M34 8.5h1M45 8.5h1M48 8.5h1M51 8.5h1M61 8.5h1M72 8.5h1M97 8.5h4M103 8.5h1M105 8.5h1M109 8.5h1M119 8.5h1M129 8.5h1M139 8.5h1M158 8.5h1M169 8.5h1M187 8.5h1M208 8.5h1M223 8.5h1M233 8.5h1M247 8.5h1M12 9.5h1M14 9.5h1M23 9.5h1M45 9.5h2M66 9.5h1M74 9.5h2M78 9.5h1M91 9.5h1M104 9.5h1M133 9.5h1M143 9.5h1M149 9.5h1M151 9.5h1M172 9.5h2M177 9.5h1M211 9.5h1M216 9.5h1M234 9.5h1M236 9.5h1M243 9.5h1M251 9.5h1M254 9.5h1M37 10.5h1M70 10.5h2M85 10.5h1M114 10.5h1M147 10.5h1M157 10.5h1M190 10.5h1M17 11.5h2M40 11.5h1M71 11.5h2M94 11.5h1M101 11.5h2M110 11.5h1M113 11.5h1M116 11.5h1M124 11.5h1M141 11.5h1M156 11.5h2M210 11.5h1M216 11.5h1M225 11.5h1M241 11.5h1M247 11.5h1M250 11.5h1M255 11.5h1M29 12.5h1M47 12.5h1M51 12.5h2M54 12.5h2M74 12.5h1M76 12.5h1M88 12.5h1M117 12.5h1M134 12.5h1M145 12.5h1M148 12.5h1M156 12.5h2M163 12.5h1M191 12.5h1M200 12.5h1M202 12.5h2M213 12.5h1M224 12.5h1M228 12.5h1M234 12.5h1M236 12.5h1M12 13.5h2M18 13.5h1M23 13.5h1M43 13.5h1M53 13.5h1M69 13.5h1M72 13.5h1M82 13.5h1M99 13.5h2M122 13.5h1M155 13.5h1M157 13.5h1M170 13.5h1M177 13.5h1M179 13.5h2M192 13.5h1M195 13.5h1M226 13.5h1M248 13.5h1M251 13.5h3M3 14.5h1M11 14.5h1M13 14.5h1M28 14.5h1M30 14.5h1M86 14.5h1M149 14.5h1M170 14.5h2M174 14.5h3M179 14.5h2M223 14.5h1M236 14.5h1M241 14.5h1M2 15.5h1M33 15.5h1M36 15.5h1M52 15.5h1M56 15.5h1M71 15.5h1M73 15.5h1M75 15.5h1M90 15.5h1M96 15.5h1M106 15.5h1M163 15.5h2M186 15.5h1M201 15.5h1M209 15.5h1M211 15.5h1M227 15.5h1M253 15.5h1M6 16.5h1M31 16.5h1M38 16.5h1M82 16.5h1M94 16.5h1M116 16.5h1M141 16.5h1M145 16.5h1M163 16.5h1M177 16.5h1M185 16.5h1M187 16.5h1M195 16.5h1M198 16.5h1M229 16.5h1M254 16.5h1M3 17.5h1M15 17.5h1M42 17.5h1M50 17.5h1M62 17.5h1M67 17.5h1M84 17.5h1M93 17.5h1M99 17.5h1M123 17.5h2M148 17.5h1M162 17.5h1M169 17.5h1M185 17.5h1M192 17.5h1M202 17.5h1M222 17.5h1M230 17.5h1M247 17.5h2M254 17.5h1M4 18.5h1M9 18.5h1M19 18.5h1M23 18.5h1M37 18.5h1M63 18.5h2M111 18.5h1M114 18.5h1M130 18.5h1M181 18.5h1M206 18.5h1M215 18.5h1M219 18.5h1M221 18.5h2M251 18.5h1M254 18.5h1M5 19.5h1M17 19.5h2M22 19.5h1M34 19.5h1M37 19.5h1M47 19.5h1M49 19.5h1M111 19.5h1M124 19.5h1M126 19.5h1M128 19.5h1M134 19.5h1M151 19.5h1M155 19.5h1M157 19.5h1M175 19.5h3M195 19.5h1M207 19.5h1M223 19.5h1M232 19.5h1M238 19.5h1M241 19.5h1M249 19.5h2M27 20.5h1M32 20.5h1M34 20.5h1M53 20.5h1M58 20.5h1M65 20.5h1M88 20.5h1M95 20.5h1M100 20.5h1M126 20.5h1M137 20.5h1M163 20.5h1M182 20.5h1M240 20.5h1M1 21.5h1M16 21.5h1M93 21.5h1M107 21.5h1M161 21.5h1M175 21.5h1M191 21.5h1M197 21.5h1M201 21.5h2M216 21.5h1M220 21.5h1M232 21.5h1M241 21.5h1M243 21.5h1M252 21.5h1M13 22.5h2M16 22.5h1M72 22.5h1M79 22.5h1M92 22.5h1M103 22.5h1M120 22.5h1M122 22.5h1M126 22.5h1M149 22.5h1M169 22.5h1M174 22.5h1M203 22.5h1M209 22.5h1M214 22.5h2M239 22.5h1M241 22.5h1M245 22.5h1M248 22.5h1M252 22.5h1M22 23.5h1M25 23.5h1M71 23.5h1M107 23.5h1M111 23.5h1M116 23.5h1M156 23.5h1M164 23.5h1M197 23.5h1M204 23.5h1M218 23.5h1M11 24.5h1M21 24.5h1M25 24.5h1M36 24.5h1M64 24.5h2M67 24.5h1M70 24.5h1M75 24.5h1M79 24.5h2M88 24.5h1M94 24.5h1M124 24.5h1M147 24.5h1M151 24.5h1M185 24.5h1M189 24.5h1M193 24.5h1M230 24.5h1M233 24.5h1M4 25.5h1M19 25.5h1M30 25.5h1M63 25.5h1M87 25.5h1M94 25.5h1M96 25.5h1M113 25.5h1M115 25.5h1M121 25.5h1M123 25.5h1M134 25.5h1M153 25.5h1M174 25.5h1M182 25.5h1M199 25.5h2M212 25.5h1M249 25.5h1M16 26.5h1M21 26.5h1M28 26.5h1M42 26.5h1M44 26.5h1M60 26.5h1M92 26.5h1M101 26.5h1M104 26.5h1M112 26.5h1M151 26.5h1M159 26.5h1M169 26.5h1M173 26.5h1M188 26.5h2M197 26.5h2M201 26.5h1M211 26.5h1M25 27.5h1M31 27.5h1M49 27.5h1M55 27.5h1M92 27.5h1M116 27.5h1M139 27.5h1M161 27.5h1M164 27.5h1M168 27.5h1M176 27.5h1M179 27.5h1M185 27.5h1M199 27.5h1M206 27.5h1M209 27.5h1M211 27.5h1M226 27.5h1M236 27.5h1M4 28.5h1M25 28.5h1M41 28.5h1M92 28.5h1M114 28.5h1M133 28.5h1M136 28.5h1M173 28.5h1M200 28.5h2M215 28.5h1M228 28.5h1M237 28.5h1M12 29.5h2M27 29.5h1M43 29.5h1M62 29.5h1M69 29.5h1M125 29.5h1M130 29.5h1M140 29.5h1M147 29.5h1M159 29.5h1M172 29.5h1M177 29.5h1M182 29.5h1M189 29.5h1M193 29.5h1M212 29.5h1M245 29.5h1M3 30.5h1M11 30.5h1M19 30.5h1M22 30.5h1M25 30.5h1M38 30.5h1M68 30.5h1M71 30.5h1M83 30.5h2M87 30.5h1M92 30.5h1M97 30.5h1M102 30.5h1M119 30.5h2M122 30.5h2M133 30.5h2M146 30.5h1M148 30.5h1M151 30.5h1M163 30.5h1M174 30.5h1M181 30.5h1M209 30.5h1M255 30.5h1M43 31.5h1M60 31.5h1M72 31.5h1M81 31.5h2M94 31.5h1M107 31.5h1M118 31.5h1M159 31.5h1M181 31.5h2M196 31.5h1M222 31.5h1M253 31.5h1M19 32.5h1M29 32.5h1M36 32.5h1M48 32.5h2M51 32.5h1M62 32.5h1M114 32.5h1M122 32.5h1M136 32.5h1M144 32.5h1M211 32.5h1M213 32.5h2M223 32.5h2M228 32.5h1M249 32.5h1M9 33.5h1M22 33.5h1M37 33.5h1M53 33.5h1M60 33.5h1M95 33.5h1M105 33.5h1M122 33.5h1M149 33.5h1M164 33.5h1M166 33.5h1M177 33.5h1M187 33.5h1M195 33.5h1M202 33.5h1M211 33.5h1M225 33.5h1M35 34.5h2M48 34.5h1M108 34.5h1M129 34.5h1M142 34.5h2M168 34.5h1M178 34.5h1M199 34.5h2M212 34.5h1M215 34.5h1M250 34.5h1M254 34.5h1M35 35.5h1M46 35.5h1M49 35.5h1M53 35.5h1M66 35.5h2M70 35.5h1M87 35.5h1M90 35.5h1M95 35.5h1M105 35.5h1M117 35.5h1M122 35.5h1M160 35.5h1M162 35.5h1M168 35.5h2M183 35.5h1M215 35.5h1M221 35.5h1M230 35.5h1M245 35.5h1M253 35.5h2M18 36.5h1M26 36.5h1M29 36.5h1M34 36.5h1M42 36.5h1M50 36.5h2M79 36.5h3M98 36.5h1M110 36.5h1M113 36.5h1M129 36.5h1M134 36.5h1M136 36.5h2M149 36.5h1M173 36.5h1M180 36.5h2M206 36.5h1M231 36.5h1M240 36.5h1M22 37.5h1M29 37.5h1M45 37.5h1M83 37.5h1M85 37.5h1M93 37.5h2M103 37.5h1M114 37.5h2M118 37.5h1M142 37.5h1M175 37.5h1M185 37.5h1M189 37.5h1M196 37.5h1M223 37.5h1M227 37.5h1M229 37.5h1M247 37.5h1M12 38.5h1M22 38.5h1M24 38.5h1M33 38.5h1M41 38.5h1M60 38.5h1M69 38.5h1M71 38.5h1M84 38.5h1M90 38.5h1M92 38.5h1M133 38.5h2M137 38.5h1M148 38.5h1M150 38.5h2M156 38.5h1M163 38.5h1M181 38.5h1M188 38.5h1M207 38.5h1M209 38.5h1M241 38.5h2M248 38.5h1M3 39.5h1M31 39.5h1M44 39.5h1M53 39.5h1M58 39.5h1M67 39.5h1M129 39.5h1M155 39.5h1M177 39.5h1M179 39.5h1M203 39.5h1M215 39.5h1" stroke="#297a8e" stroke-width="1.02" fill="none"/>
<path d="M0 0.5h1M31 0.5h1M37 0.5h2M44 0.5h1M59 0.5h1M70 0.5h2M77 0.5h1M94 0.5h1M99 0.5h2M105 0.5h1M118 0.5h1M130 0.5h1M141 0.5h1M144 0.5h1M148 0.5h1M150 0.5h1M159 0.5h1M169 0.5h1M172 0.5h1M206 0.5h1M235 0.5h1M237 0.5h1M240 0.5h1M245 0.5h1M14 1.5h1M16 1.5h1M24 1.5h1M37 1.5h1M43 1.5h1M60 1.5h2M63 1.5h2M73 1.5h1M75 1.5h1M91 1.5h1M95 1.5h1M97 1.5h2M110 1.5h1M113 1.5h1M115 1.5h1M117 1.5h1M130 1.5h1M141 1.5h1M148 1.5h1M164 1.5h1M178 1.5h1M180 1.5h1M185 1.5h1M187 1.5h1M197 1.5h1M214 1.5h1M216 1.5h1M219 1.5h1M233 1.5h1M236 1.5h1M240 1.5h1M244 1.5h1M10 2.5h1M19 2.5h2M28 2.5h1M31 2.5h2M35 2.5h1M51 2.5h1M74 2.5h1M76 2.5h1M92 2.5h1M120 2.5h1M133 2.5h1M156 2.5h1M164 2.5h1M175 2.5h1M178 2.5h1M194 2.5h1M205 2.5h1M214 2.5h1M221 2.5h1M226 2.5h1M228 2.5h1M38 3.5h1M51 3.5h1M53 3.5h2M56 3.5h1M70 3.5h1M109 3.5h2M128 3.5h1M154 3.5h1M180 3.5h1M191 3.5h1M198 3.5h1M204 3.5h1M216 3.5h1M218 3.5h1M228 3.5h1M230 3.5h1M233 3.5h1M242 3.5h3M9 4.5h1M34 4.5h1M53 4.5h1M56 4.5h1M58 4.5h1M62 4.5h2M67 4.5h1M71 4.5h1M83 4.5h1M91 4.5h1M102 4.5h1M122 4.5h1M134 4.5h1M146 4.5h1M150 4.5h1M154 4.5h1M157 4.5h1M164 4.5h1M166 4.5h1M174 4.5h1M185 4.5h1M190 4.5h2M200 4.5h1M204 4.5h1M210 4.5h1M225 4.5h1M228 4.5h1M238 4.5h1M10 5.5h1M24 5.5h2M35 5.5h1M48 5.5h1M53 5.5h1M69 5.5h1M75 5.5h1M93 5.5h1M101 5.5h1M107 5.5h2M113 5.5h2M123 5.5h1M139 5.5h2M184 5.5h1M188 5.5h2M192 5.5h1M194 5.5h1M207 5.5h1M214 5.5h1M222 5.5h1M241 5.5h1M251 5.5h2M255 5.5h1M1 6.5h1M3 6.5h2M7 6.5h1M31 6.5h1M51 6.5h1M59 6.5h1M65 6.5h2M69 6.5h1M84 6.5h1M89 6.5h1M98 6.5h3M103 6.5h1M110 6.5h1M118 6.5h1M136 6.5h1M142 6.5h1M170 6.5h1M186 6.5h1M188 6.5h2M208 6.5h1M219 6.5h1M231 6.5h1M235 6.5h1M243 6.5h1M245 6.5h1M255 6.5h1M6 7.5h1M14 7.5h1M18 7.5h1M23 7.5h1M25 7.5h1M27 7.5h1M41 7.5h1M50 7.5h1M55 7.5h1M81 7.5h2M96 7.5h1M98 7.5h2M108 7.5h1M114 7.5h1M118 7.5h1M120 7.5h1M136 7.5h1M144 7.5h1M148 7.5h1M162 7.5h1M169 7.5h1M180 7.5h1M188 7.5h1M191 7.5h1M199 7.5h1M224 7.5h1M239 7.5h1M246 7.5h2M6 8.5h1M10 8.5h1M36 8.5h1M39 8.5h2M52 8.5h1M56 8.5h1M60 8.5h1M68 8.5h1M71 8.5h1M87 8.5h1M93 8.5h1M131 8.5h1M138 8.5h1M146 8.5h2M156 8.5h1M175 8.5h1M177 8.5h1M185 8.5h2M188 8.5h1M190 8.5h1M211 8.5h1M224 8.5h1M228 8.5h1M242 8.5h1M253 8.5h3M6 9.5h1M11 9.5h1M13 9.5h1M25 9.5h1M27 9.5h1M30 9.5h1M51 9.5h1M56 9.5h3M109 9.5h1M119 9.5h1M123 9.5h2M155 9.5h1M165 9.5h1M170 9.5h1M180 9.5h2M192 9.5h1M201 9.5h1M203 9.5h1M213 9.5h1M231 9.5h1M0 10.5h1M15 10.5h1M18 10.5h1M25 10.5h1M31 10.5h1M58 10.5h1M74 10.5h1M86 10.5h1M93 10.5h1M115 10.5h2M124 10.5h1M142 10.5h1M165 10.5h1M186 10.5h1M196 10.5h1M216 10.5h2M223 10.5h1M234 10.5h1M237 10.5h1M251 10.5h1M2 11.5h1M8 11.5h1M26 11.5h3M31 11.5h1M39 11.5h1M44 11.5h1M51 11.5h1M63 11.5h1M69 11.5h1M75 11.5h1M80 11.5h1M84 11.5h1M115 11.5h1M121 11.5h1M131 11.5h1M144 11.5h1M148 11.5h1M160 11.5h1M173 11.5h1M177 11.5h2M181 11.5h1M188 11.5h1M191 11.5h1M195 11.5h1M209 11.5h1M224 11.5h1M226 11.5h2M234 11.5h1M238 11.5h1M242 11.5h1M249 11.5h1M15 12.5h1M17 12.5h1M19 12.5h1M21 12.5h1M28 12.5h1M37 12.5h1M68 12.5h1M73 12.5h1M79 12.5h2M93 12.5h1M102 12.5h1M105 12.5h2M110 12.5h1M114 12.5h1M128 12.5h1M153 12.5h1M179 12.5h2M198 12.5h1M212 12.5h1M223 12.5h1M227 12.5h1M231 12.5h1M237 12.5h1M247 12.5h1M252 12.5h1M1 13.5h1M5 13.5h1M26 13.5h1M32 13.5h1M45 13.5h1M58 13.5h1M68 13.5h1M76 13.5h1M81 13.5h1M85 13.5h1M102 13.5h1M117 13.5h2M124 13.5h2M130 13.5h1M135 13.5h2M139 13.5h1M147 13.5h2M172 13.5h1M178 13.5h1M183 13.5h1M191 13.5h1M196 13.5h1M215 13.5h1M218 13.5h1M222 13.5h1M227 13.5h1M254 13.5h1M5 14.5h1M10 14.5h1M20 14.5h1M29 14.5h1M43 14.5h2M59 14.5h1M66 14.5h1M68 14.5h1M75 14.5h1M79 14.5h1M90 14.5h1M99 14.5h1M108 14.5h1M114 14.5h1M117 14.5h1M129 14.5h1M152 14.5h1M161 14.5h1M163 14.5h1M168 14.5h1M181 14.5h3M185 14.5h1M197 14.5h1M218 14.5h1M220 14.5h1M227 14.5h1M245 14.5h1M21 15.5h1M38 15.5h1M40 15.5h1M51 15.5h1M55 15.5h1M57 15.5h2M63 15.5h1M72 15.5h1M77 15.5h1M79 15.5h1M86 15.5h1M91 15.5h2M113 15.5h1M115 15.5h1M128 15.5h1M146 15.5h1M153 15.5h1M177 15.5h1M184 15.5h2M193 15.5h1M200 15.5h1M202 15.5h2M210 15.5h1M220 15.5h2M233 15.5h1M248 15.5h1M254 15.5h2M4 16.5h2M28 16.5h1M34 16.5h1M41 16.5h1M45 16.5h2M49 16.5h1M72 16.5h1M77 16.5h1M97 16.5h1M103 16.5h1M111 16.5h2M115 16.5h1M119 16.5h1M136 16.5h1M140 16.5h1M147 16.5h1M151 16.5h1M155 16.5h1M165 16.5h1M184 16.5h1M186 16.5h1M192 16.5h3M211 16.5h1M235 16.5h1M239 16.5h1M252 16.5h1M7 17.5h1M9 17.5h1M14 17.5h1M20 17.5h2M27 17.5h1M43 17.5h1M45 17.5h1M48 17.5h1M61 17.5h1M81 17.5h3M91 17.5h1M104 17.5h1M107 17.5h2M122 17.5h1M125 17.5h1M129 17.5h1M133 17.5h1M144 17.5h2M152 17.5h1M154 17.5h1M160 17.5h1M163 17.5h1M178 17.5h1M186 17.5h1M191 17.5h1M196 17.5h1M200 17.5h2M217 17.5h1M229 17.5h1M231 17.5h1M239 17.5h1M252 17.5h1M3 18.5h1M7 18.5h2M11 18.5h1M18 18.5h1M24 18.5h1M31 18.5h1M42 18.5h1M51 18.5h1M70 18.5h1M81 18.5h1M89 18.5h1M97 18.5h1M109 18.5h1M136 18.5h3M149 18.5h1M154 18.5h1M163 18.5h1M175 18.5h1M190 18.5h1M198 18.5h1M200 18.5h1M209 18.5h1M217 18.5h1M220 18.5h1M225 18.5h1M231 18.5h2M244 18.5h1M16 19.5h1M20 19.5h1M23 19.5h1M25 19.5h1M48 19.5h1M50 19.5h1M93 19.5h2M107 19.5h1M127 19.5h1M143 19.5h1M150 19.5h1M161 19.5h1M164 19.5h1M172 19.5h2M181 19.5h1M188 19.5h2M194 19.5h1M217 19.5h1M221 19.5h1M235 19.5h1M237 19.5h1M247 19.5h2M9 20.5h1M19 20.5h1M75 20.5h1M87 20.5h1M114 20.5h1M116 20.5h1M120 20.5h1M128 20.5h1M146 20.5h1M154 20.5h1M166 20.5h1M169 20.5h1M177 20.5h1M179 20.5h1M216 20.5h1M224 20.5h1M250 20.5h2M2 21.5h3M8 21.5h1M13 21.5h1M17 21.5h1M32 21.5h1M43 21.5h1M46 21.5h2M63 21.5h1M68 21.5h1M88 21.5h2M92 21.5h1M100 21.5h2M110 21.5h1M119 21.5h1M125 21.5h1M127 21.5h1M131 21.5h1M158 21.5h1M173 21.5h1M177 21.5h3M181 21.5h3M195 21.5h1M213 21.5h1M217 21.5h1M242 21.5h1M245 21.5h1M250 21.5h2M9 22.5h1M12 22.5h1M42 22.5h1M53 22.5h1M68 22.5h1M78 22.5h1M91 22.5h1M95 22.5h1M118 22.5h2M124 22.5h1M128 22.5h2M131 22.5h1M133 22.5h1M135 22.5h1M145 22.5h1M160 22.5h1M171 22.5h1M181 22.5h1M191 22.5h1M206 22.5h2M220 22.5h1M236 22.5h2M240 22.5h1M249 22.5h1M253 22.5h1M2 23.5h1M12 23.5h1M42 23.5h1M49 23.5h1M63 23.5h1M72 23.5h1M96 23.5h2M100 23.5h1M114 23.5h1M130 23.5h1M146 23.5h1M166 23.5h1M180 23.5h1M185 23.5h2M189 23.5h1M192 23.5h1M196 23.5h1M199 23.5h1M211 23.5h1M213 23.5h1M224 23.5h1M236 23.5h1M243 23.5h1M250 23.5h2M6 24.5h1M27 24.5h1M29 24.5h1M31 24.5h1M44 24.5h1M48 24.5h2M53 24.5h1M66 24.5h1M69 24.5h1M73 24.5h1M81 24.5h1M104 24.5h1M125 24.5h1M138 24.5h1M153 24.5h1M172 24.5h1M177 24.5h1M199 24.5h2M216 24.5h1M221 24.5h1M229 24.5h1M236 24.5h1M241 24.5h1M248 24.5h1M252 24.5h1M5 25.5h2M8 25.5h1M14 25.5h1M16 25.5h1M20 25.5h1M24 25.5h1M32 25.5h1M41 25.5h2M44 25.5h1M70 25.5h1M73 25.5h2M77 25.5h1M99 25.5h1M108 25.5h1M112 25.5h1M122 25.5h1M135 25.5h1M146 25.5h1M160 25.5h1M178 25.5h1M185 25.5h1M218 25.5h1M248 25.5h1M252 25.5h1M254 25.5h1M0 26.5h1M8 26.5h2M13 26.5h1M17 26.5h1M24 26.5h1M32 26.5h2M43 26.5h1M53 26.5h1M56 26.5h1M59 26.5h1M61 26.5h1M69 26.5h1M76 26.5h1M88 26.5h1M105 26.5h1M110 26.5h1M156 26.5h1M179 26.5h1M181 26.5h1M184 26.5h1M187 26.5h1M190 26.5h1M207 26.5h1M224 26.5h1M249 26.5h1M252 26.5h1M14 27.5h1M16 27.5h2M21 27.5h1M27 27.5h1M30 27.5h1M36 27.5h1M39 27.5h2M60 27.5h2M67 27.5h2M71 27.5h2M107 27.5h1M110 27.5h1M121 27.5h1M130 27.5h1M134 27.5h3M138 27.5h1M154 27.5h1M158 27.5h1M163 27.5h1M169 27.5h1M175 27.5h1M178 27.5h1M180 27.5h1M184 27.5h1M214 27.5h2M235 27.5h1M238 27.5h1M246 27.5h1M3 28.5h1M5 28.5h3M11 28.5h2M14 28.5h1M19 28.5h1M34 28.5h2M46 28.5h1M48 28.5h1M56 28.5h1M60 28.5h1M68 28.5h1M76 28.5h1M97 28.5h2M102 28.5h1M108 28.5h1M117 28.5h1M134 28.5h1M137 28.5h2M143 28.5h1M151 28.5h1M153 28.5h1M159 28.5h1M163 28.5h1M181 28.5h1M199 28.5h1M204 28.5h1M216 28.5h4M221 28.5h1M231 28.5h1M235 28.5h1M239 28.5h1M243 28.5h1M255 28.5h1M11 29.5h1M25 29.5h1M28 29.5h2M45 29.5h1M75 29.5h1M139 29.5h1M141 29.5h3M152 29.5h2M173 29.5h1M179 29.5h1M192 29.5h1M198 29.5h1M213 29.5h1M227 29.5h1M238 29.5h2M252 29.5h1M21 30.5h1M26 30.5h1M33 30.5h1M45 30.5h1M48 30.5h1M51 30.5h1M57 30.5h1M60 30.5h1M69 30.5h1M101 30.5h1M114 30.5h1M124 30.5h1M129 30.5h2M147 30.5h1M164 30.5h1M169 30.5h1M173 30.5h1M175 30.5h1M190 30.5h1M196 30.5h1M206 30.5h1M212 30.5h1M228 30.5h1M8 31.5h1M19 31.5h1M56 31.5h1M58 31.5h2M66 31.5h1M69 31.5h1M76 31.5h1M98 31.5h1M104 31.5h1M112 31.5h1M129 31.5h1M133 31.5h1M138 31.5h1M140 31.5h1M144 31.5h2M148 31.5h1M151 31.5h2M158 31.5h1M163 31.5h1M190 31.5h1M219 31.5h1M233 31.5h1M245 31.5h1M250 31.5h1M3 32.5h1M7 32.5h1M9 32.5h1M28 32.5h1M63 32.5h1M76 32.5h3M103 32.5h1M108 32.5h1M111 32.5h1M117 32.5h1M121 32.5h1M124 32.5h1M132 32.5h1M153 32.5h1M155 32.5h1M159 32.5h1M165 32.5h1M170 32.5h2M173 32.5h2M176 32.5h1M180 32.5h1M191 32.5h2M204 32.5h1M208 32.5h3M216 32.5h2M221 32.5h2M233 32.5h1M241 32.5h1M28 33.5h2M43 33.5h1M46 33.5h1M49 33.5h1M51 33.5h1M54 33.5h1M80 33.5h1M84 33.5h1M90 33.5h1M139 33.5h2M144 33.5h1M165 33.5h1M167 33.5h1M169 33.5h1M171 33.5h2M175 33.5h1M185 33.5h1M189 33.5h1M194 33.5h1M197 33.5h1M207 33.5h1M213 33.5h1M226 33.5h2M249 33.5h1M0 34.5h2M17 34.5h1M22 34.5h1M24 34.5h1M40 34.5h3M49 34.5h1M56 34.5h1M58 34.5h1M61 34.5h1M67 34.5h1M83 34.5h1M95 34.5h1M101 34.5h1M110 34.5h1M112 34.5h3M118 34.5h2M132 34.5h1M134 34.5h1M137 34.5h1M141 34.5h1M154 34.5h1M159 34.5h1M163 34.5h2M174 34.5h1M186 34.5h1M190 34.5h1M196 34.5h2M228 34.5h1M232 34.5h1M245 34.5h1M248 34.5h2M17 35.5h1M19 35.5h1M41 35.5h1M55 35.5h2M62 35.5h2M78 35.5h1M88 35.5h1M104 35.5h1M131 35.5h1M140 35.5h1M156 35.5h1M158 35.5h2M174 35.5h1M182 35.5h1M185 35.5h1M194 35.5h1M198 35.5h1M203 35.5h1M205 35.5h1M218 35.5h1M223 35.5h1M229 35.5h1M252 35.5h1M255 35.5h1M6 36.5h1M10 36.5h1M17 36.5h1M22 36.5h1M28 36.5h1M30 36.5h3M43 36.5h1M48 36.5h1M53 36.5h1M74 36.5h1M78 36.5h1M83 36.5h2M97 36.5h1M111 36.5h1M118 36.5h1M131 36.5h1M138 36.5h1M145 36.5h1M151 36.5h1M175 36.5h1M179 36.5h1M191 36.5h1M196 36.5h1M220 36.5h1M245 36.5h1M0 37.5h1M4 37.5h1M11 37.5h1M28 37.5h1M30 37.5h1M33 37.5h2M44 37.5h1M54 37.5h1M63 37.5h1M73 37.5h1M88 37.5h1M100 37.5h1M116 37.5h1M122 37.5h1M143 37.5h1M151 37.5h1M159 37.5h1M166 37.5h1M173 37.5h1M182 37.5h1M186 37.5h1M195 37.5h1M197 37.5h1M200 37.5h2M230 37.5h1M1 38.5h1M37 38.5h1M39 38.5h1M44 38.5h1M52 38.5h1M55 38.5h1M63 38.5h1M80 38.5h1M93 38.5h1M100 38.5h1M103 38.5h1M123 38.5h1M146 38.5h1M152 38.5h2M174 38.5h1M184 38.5h1M189 38.5h1M191 38.5h1M220 38.5h1M230 38.5h1M238 38.5h1M243 38.5h1M245 38.5h1M250 38.5h1M252 38.5h2M10 39.5h1M17 39.5h1M30 39.5h1M39 39.5h2M66 39.5h1M75 39.5h1M78 39.5h1M80 39.5h1M101 39.5h1M117 39.5h1M138 39.5h1M140 39.5h1M147 39.5h1M165 39.5h1M178 39.5h1M185 39.5h2M198 39.5h1M201 39.5h2M226 39.5h1M233 39.5h1" stroke="#26828e" stroke-width="1.02" fill="none"/>
<path d="M1 0.5h1M3 0.5h1M11 0.5h1M20 0.5h1M24 0.5h1M29 0.5h1M34 0.5h2M39 0.5h1M51 0.5h1M55 0.5h1M58 0.5h1M60 0.5h1M67 0.5h2M86 0.5h1M91 0.5h1M93 0.5h1M95 0.5h1M98 0.5h1M102 0.5h1M107 0.5h1M112 0.5h1M120 0.5h3M125 0.5h2M155 0.5h1M166 0.5h3M171 0.5h1M176 0.5h1M180 0.5h1M183 0.5h1M188 0.5h1M199 0.5h1M202 0.5h1M205 0.5h1M214 0.5h2M218 0.5h1M224 0.5h2M228 0.5h1M239 0.5h1M241 0.5h1M252 0.5h1M0 1.5h2M6 1.5h1M9 1.5h1M17 1.5h2M20 1.5h2M25 1.5h2M30 1.5h2M33 1.5h1M39 1.5h1M51 1.5h1M69 1.5h1M76 1.5h3M82 1.5h3M86 1.5h1M96 1.5h1M99 1.5h2M103 1.5h4M114 1.5h1M118 1.5h1M127 1.5h1M134 1.5h2M137 1.5h1M140 1.5h1M142 1.5h2M147 1.5h1M150 1.5h1M154 1.5h1M166 1.5h1M175 1.5h1M182 1.5h1M188 1.5h4M195 1.5h2M207 1.5h1M211 1.5h1M213 1.5h1M231 1.5h2M234 1.5h2M249 1.5h1M5 2.5h1M9 2.5h1M11 2.5h1M18 2.5h1M21 2.5h1M25 2.5h1M27 2.5h1M40 2.5h2M43 2.5h1M49 2.5h1M52 2.5h1M56 2.5h1M58 2.5h3M85 2.5h2M99 2.5h1M104 2.5h1M111 2.5h1M136 2.5h2M145 2.5h3M159 2.5h1M172 2.5h1M177 2.5h1M180 2.5h1M189 2.5h1M192 2.5h1M195 2.5h1M197 2.5h1M207 2.5h2M215 2.5h1M217 2.5h1M219 2.5h1M222 2.5h1M225 2.5h1M229 2.5h1M237 2.5h1M243 2.5h1M2 3.5h1M12 3.5h5M19 3.5h2M23 3.5h1M48 3.5h2M52 3.5h1M59 3.5h2M64 3.5h1M67 3.5h1M69 3.5h1M78 3.5h3M87 3.5h1M93 3.5h3M107 3.5h1M112 3.5h2M116 3.5h1M120 3.5h1M130 3.5h1M134 3.5h1M142 3.5h2M145 3.5h1M148 3.5h2M155 3.5h1M157 3.5h1M168 3.5h1M175 3.5h1M179 3.5h1M182 3.5h2M199 3.5h1M206 3.5h1M213 3.5h1M215 3.5h1M222 3.5h1M226 3.5h1M229 3.5h1M249 3.5h1M13 4.5h1M15 4.5h2M21 4.5h1M33 4.5h1M36 4.5h1M42 4.5h1M47 4.5h2M52 4.5h1M57 4.5h1M59 4.5h1M73 4.5h1M77 4.5h2M90 4.5h1M93 4.5h2M99 4.5h1M107 4.5h2M110 4.5h1M129 4.5h3M135 4.5h1M137 4.5h1M147 4.5h1M149 4.5h1M151 4.5h1M177 4.5h1M181 4.5h1M183 4.5h1M194 4.5h1M196 4.5h1M201 4.5h1M205 4.5h1M209 4.5h1M212 4.5h3M223 4.5h2M226 4.5h2M232 4.5h1M244 4.5h5M251 4.5h1M6 5.5h1M14 5.5h1M18 5.5h1M29 5.5h1M32 5.5h1M34 5.5h1M43 5.5h1M58 5.5h1M62 5.5h1M83 5.5h2M94 5.5h1M97 5.5h1M105 5.5h1M109 5.5h1M115 5.5h1M119 5.5h1M124 5.5h3M132 5.5h1M137 5.5h1M144 5.5h1M151 5.5h1M153 5.5h1M164 5.5h1M173 5.5h1M185 5.5h1M197 5.5h1M203 5.5h1M208 5.5h1M216 5.5h2M219 5.5h1M221 5.5h1M224 5.5h1M227 5.5h3M233 5.5h2M238 5.5h1M244 5.5h1M246 5.5h1M248 5.5h1M253 5.5h2M2 6.5h1M11 6.5h1M16 6.5h1M22 6.5h1M28 6.5h1M40 6.5h1M54 6.5h2M63 6.5h1M76 6.5h1M79 6.5h1M81 6.5h1M87 6.5h1M92 6.5h1M102 6.5h1M109 6.5h1M114 6.5h1M117 6.5h1M119 6.5h1M125 6.5h1M134 6.5h1M150 6.5h2M156 6.5h1M162 6.5h5M179 6.5h1M181 6.5h2M185 6.5h1M190 6.5h1M200 6.5h1M206 6.5h1M226 6.5h1M230 6.5h1M232 6.5h1M241 6.5h2M247 6.5h1M1 7.5h2M5 7.5h1M19 7.5h1M21 7.5h2M24 7.5h1M26 7.5h1M37 7.5h1M39 7.5h1M45 7.5h2M58 7.5h2M62 7.5h1M65 7.5h1M69 7.5h1M74 7.5h2M79 7.5h1M90 7.5h1M94 7.5h2M100 7.5h1M119 7.5h1M121 7.5h1M126 7.5h1M146 7.5h1M154 7.5h1M161 7.5h1M172 7.5h1M174 7.5h1M176 7.5h2M181 7.5h1M193 7.5h1M198 7.5h1M202 7.5h2M208 7.5h3M218 7.5h2M229 7.5h1M231 7.5h1M236 7.5h1M241 7.5h2M248 7.5h1M250 7.5h1M255 7.5h1M11 8.5h2M15 8.5h3M25 8.5h1M35 8.5h1M38 8.5h1M47 8.5h1M50 8.5h1M53 8.5h3M57 8.5h1M59 8.5h1M62 8.5h2M73 8.5h1M78 8.5h1M86 8.5h1M102 8.5h1M114 8.5h1M121 8.5h1M124 8.5h1M126 8.5h2M149 8.5h3M153 8.5h3M159 8.5h1M162 8.5h1M165 8.5h1M170 8.5h1M174 8.5h1M180 8.5h1M195 8.5h2M209 8.5h2M230 8.5h1M246 8.5h1M249 8.5h1M1 9.5h1M10 9.5h1M15 9.5h1M19 9.5h1M22 9.5h1M26 9.5h1M32 9.5h1M36 9.5h1M42 9.5h1M47 9.5h1M50 9.5h1M54 9.5h2M61 9.5h1M70 9.5h1M72 9.5h1M82 9.5h1M90 9.5h1M92 9.5h1M108 9.5h1M111 9.5h1M120 9.5h3M125 9.5h1M128 9.5h2M131 9.5h2M141 9.5h2M144 9.5h1M150 9.5h1M153 9.5h1M164 9.5h1M171 9.5h1M175 9.5h1M185 9.5h1M189 9.5h1M195 9.5h2M200 9.5h1M204 9.5h1M209 9.5h1M229 9.5h2M235 9.5h1M237 9.5h3M245 9.5h1M5 10.5h1M11 10.5h1M13 10.5h1M26 10.5h1M32 10.5h1M38 10.5h1M44 10.5h1M51 10.5h1M59 10.5h1M63 10.5h1M65 10.5h2M83 10.5h2M90 10.5h1M94 10.5h1M96 10.5h2M110 10.5h1M130 10.5h1M138 10.5h1M143 10.5h3M154 10.5h3M158 10.5h1M160 10.5h1M164 10.5h1M185 10.5h1M201 10.5h1M203 10.5h1M219 10.5h1M236 10.5h1M242 10.5h2M250 10.5h1M14 11.5h1M19 11.5h2M29 11.5h1M36 11.5h1M45 11.5h1M73 11.5h1M77 11.5h1M81 11.5h2M100 11.5h1M106 11.5h1M114 11.5h1M118 11.5h1M122 11.5h1M134 11.5h2M142 11.5h1M149 11.5h1M154 11.5h2M167 11.5h1M169 11.5h1M174 11.5h1M184 11.5h1M194 11.5h1M196 11.5h1M199 11.5h1M211 11.5h1M215 11.5h1M217 11.5h1M219 11.5h2M228 11.5h1M232 11.5h2M239 11.5h2M246 11.5h1M248 11.5h1M251 11.5h2M0 12.5h1M3 12.5h2M6 12.5h1M16 12.5h1M20 12.5h1M25 12.5h1M30 12.5h2M39 12.5h2M46 12.5h1M48 12.5h1M53 12.5h1M56 12.5h1M60 12.5h2M71 12.5h1M92 12.5h1M97 12.5h3M101 12.5h1M103 12.5h1M107 12.5h3M111 12.5h2M133 12.5h1M152 12.5h1M155 12.5h1M159 12.5h2M171 12.5h1M178 12.5h1M182 12.5h1M185 12.5h1M190 12.5h1M194 12.5h1M196 12.5h1M201 12.5h1M208 12.5h3M214 12.5h2M218 12.5h2M235 12.5h1M242 12.5h1M245 12.5h1M248 12.5h1M253 12.5h1M255 12.5h1M0 13.5h1M3 13.5h1M15 13.5h1M20 13.5h1M25 13.5h1M33 13.5h1M38 13.5h1M42 13.5h1M44 13.5h1M49 13.5h2M52 13.5h1M62 13.5h1M77 13.5h2M83 13.5h1M86 13.5h1M89 13.5h3M95 13.5h1M98 13.5h1M103 13.5h1M112 13.5h1M114 13.5h2M129 13.5h1M131 13.5h1M158 13.5h1M163 13.5h1M165 13.5h1M171 13.5h1M173 13.5h1M194 13.5h1M208 13.5h1M210 13.5h1M220 13.5h2M223 13.5h1M228 13.5h2M234 13.5h1M243 13.5h1M245 13.5h2M249 13.5h2M2 14.5h1M12 14.5h1M14 14.5h1M24 14.5h4M31 14.5h1M34 14.5h2M39 14.5h1M41 14.5h2M45 14.5h1M50 14.5h1M53 14.5h1M62 14.5h2M67 14.5h1M80 14.5h1M82 14.5h1M84 14.5h1M87 14.5h1M89 14.5h1M92 14.5h1M119 14.5h1M122 14.5h1M139 14.5h1M146 14.5h2M155 14.5h2M159 14.5h1M162 14.5h1M164 14.5h1M169 14.5h1M173 14.5h1M184 14.5h1M201 14.5h1M215 14.5h1M219 14.5h1M224 14.5h1M228 14.5h2M243 14.5h1M249 14.5h1M253 14.5h1M1 15.5h1M3 15.5h1M5 15.5h2M9 15.5h1M15 15.5h1M17 15.5h1M30 15.5h1M37 15.5h1M39 15.5h1M59 15.5h1M61 15.5h1M74 15.5h1M76 15.5h1M78 15.5h1M81 15.5h1M87 15.5h1M94 15.5h1M102 15.5h1M104 15.5h1M107 15.5h2M111 15.5h1M116 15.5h1M120 15.5h1M125 15.5h1M129 15.5h2M135 15.5h1M138 15.5h1M147 15.5h1M154 15.5h1M157 15.5h2M162 15.5h1M165 15.5h1M174 15.5h1M179 15.5h1M192 15.5h1M204 15.5h1M215 15.5h1M222 15.5h1M234 15.5h1M238 15.5h1M246 15.5h1M252 15.5h1M8 16.5h1M11 16.5h1M14 16.5h3M21 16.5h1M29 16.5h1M32 16.5h1M35 16.5h1M43 16.5h2M47 16.5h1M53 16.5h1M57 16.5h1M60 16.5h1M65 16.5h1M68 16.5h1M78 16.5h1M84 16.5h1M92 16.5h2M104 16.5h1M114 16.5h1M117 16.5h1M120 16.5h1M123 16.5h2M130 16.5h1M132 16.5h1M135 16.5h1M144 16.5h1M150 16.5h1M152 16.5h3M166 16.5h1M168 16.5h2M173 16.5h1M178 16.5h2M183 16.5h1M196 16.5h1M199 16.5h1M208 16.5h3M212 16.5h1M223 16.5h1M226 16.5h3M244 16.5h1M2 17.5h1M6 17.5h1M10 17.5h3M16 17.5h1M26 17.5h1M32 17.5h1M40 17.5h1M44 17.5h1M49 17.5h1M53 17.5h1M60 17.5h1M74 17.5h1M78 17.5h1M90 17.5h1M94 17.5h2M98 17.5h1M102 17.5h1M110 17.5h1M119 17.5h1M141 17.5h1M147 17.5h1M149 17.5h2M170 17.5h1M176 17.5h1M188 17.5h1M195 17.5h1M207 17.5h1M212 17.5h1M220 17.5h1M223 17.5h1M227 17.5h2M243 17.5h1M1 18.5h1M10 18.5h1M12 18.5h1M20 18.5h1M27 18.5h1M29 18.5h2M36 18.5h1M40 18.5h1M43 18.5h2M46 18.5h1M49 18.5h2M54 18.5h1M58 18.5h1M62 18.5h1M74 18.5h1M76 18.5h1M98 18.5h2M104 18.5h1M108 18.5h1M122 18.5h1M126 18.5h2M134 18.5h1M139 18.5h2M155 18.5h1M164 18.5h1M172 18.5h1M216 18.5h1M226 18.5h1M228 18.5h2M233 18.5h2M255 18.5h1M2 19.5h1M8 19.5h2M14 19.5h2M19 19.5h1M27 19.5h1M33 19.5h1M36 19.5h1M39 19.5h1M42 19.5h1M51 19.5h1M54 19.5h1M63 19.5h1M69 19.5h1M76 19.5h1M80 19.5h1M86 19.5h1M89 19.5h1M92 19.5h1M99 19.5h1M101 19.5h1M103 19.5h2M106 19.5h1M110 19.5h1M115 19.5h2M130 19.5h1M132 19.5h2M139 19.5h1M141 19.5h1M144 19.5h1M147 19.5h1M156 19.5h1M158 19.5h1M160 19.5h1M162 19.5h1M168 19.5h1M171 19.5h1M184 19.5h1M190 19.5h1M206 19.5h1M210 19.5h1M214 19.5h1M216 19.5h1M219 19.5h1M230 19.5h1M233 19.5h1M254 19.5h1M2 20.5h1M13 20.5h1M17 20.5h1M22 20.5h2M26 20.5h1M28 20.5h1M40 20.5h1M47 20.5h2M62 20.5h3M66 20.5h3M73 20.5h1M89 20.5h2M94 20.5h1M103 20.5h3M113 20.5h1M117 20.5h1M140 20.5h2M150 20.5h2M153 20.5h1M156 20.5h1M162 20.5h1M165 20.5h1M168 20.5h1M178 20.5h1M191 20.5h1M193 20.5h1M195 20.5h1M197 20.5h2M201 20.5h1M203 20.5h1M205 20.5h1M212 20.5h1M217 20.5h1M219 20.5h1M225 20.5h1M227 20.5h2M230 20.5h1M245 20.5h1M252 20.5h1M7 21.5h1M10 21.5h1M14 21.5h1M20 21.5h1M33 21.5h1M35 21.5h3M48 21.5h1M52 21.5h2M60 21.5h2M72 21.5h1M79 21.5h1M81 21.5h1M94 21.5h1M106 21.5h1M112 21.5h3M116 21.5h1M118 21.5h1M120 21.5h1M128 21.5h1M139 21.5h1M142 21.5h1M159 21.5h2M164 21.5h1M176 21.5h1M184 21.5h1M186 21.5h1M203 21.5h1M208 21.5h1M218 21.5h1M221 21.5h2M231 21.5h1M236 21.5h3M249 21.5h1M253 21.5h2M11 22.5h1M24 22.5h3M31 22.5h3M40 22.5h1M43 22.5h1M66 22.5h1M70 22.5h1M75 22.5h2M88 22.5h2M94 22.5h1M100 22.5h2M104 22.5h1M106 22.5h1M123 22.5h1M127 22.5h1M132 22.5h1M134 22.5h1M146 22.5h1M153 22.5h4M159 22.5h1M163 22.5h1M166 22.5h1M170 22.5h1M175 22.5h1M184 22.5h1M198 22.5h1M208 22.5h1M212 22.5h1M218 22.5h1M221 22.5h1M223 22.5h1M227 22.5h1M230 22.5h2M234 22.5h1M247 22.5h1M10 23.5h2M14 23.5h2M20 23.5h1M32 23.5h1M38 23.5h2M59 23.5h1M61 23.5h2M73 23.5h1M76 23.5h1M86 23.5h1M90 23.5h1M95 23.5h1M103 23.5h2M117 23.5h1M119 23.5h1M122 23.5h1M149 23.5h1M152 23.5h1M160 23.5h1M165 23.5h1M168 23.5h1M172 23.5h1M174 23.5h1M176 23.5h1M191 23.5h1M195 23.5h1M200 23.5h2M208 23.5h1M212 23.5h1M215 23.5h1M227 23.5h4M232 23.5h1M238 23.5h1M244 23.5h1M248 23.5h1M252 23.5h1M7 24.5h1M12 24.5h1M18 24.5h1M23 24.5h1M26 24.5h1M28 24.5h1M30 24.5h1M34 24.5h1M47 24.5h1M50 24.5h1M52 24.5h1M59 24.5h2M62 24.5h1M71 24.5h1M76 24.5h1M86 24.5h1M89 24.5h1M93 24.5h1M101 24.5h1M103 24.5h1M108 24.5h1M119 24.5h1M136 24.5h1M140 24.5h1M143 24.5h1M146 24.5h1M149 24.5h2M152 24.5h1M163 24.5h1M165 24.5h2M180 24.5h1M186 24.5h1M188 24.5h1M190 24.5h1M201 24.5h3M210 24.5h1M213 24.5h1M227 24.5h2M231 24.5h1M237 24.5h1M243 24.5h1M251 24.5h1M255 24.5h1M1 25.5h1M7 25.5h1M9 25.5h1M11 25.5h2M29 25.5h1M31 25.5h1M39 25.5h1M43 25.5h1M45 25.5h1M76 25.5h1M83 25.5h2M88 25.5h1M93 25.5h1M107 25.5h1M109 25.5h1M114 25.5h1M120 25.5h1M125 25.5h2M129 25.5h2M136 25.5h1M168 25.5h1M175 25.5h1M179 25.5h1M191 25.5h1M216 25.5h1M219 25.5h1M231 25.5h1M234 25.5h1M242 25.5h1M251 25.5h1M255 25.5h1M1 26.5h1M5 26.5h1M7 26.5h1M12 26.5h1M14 26.5h1M18 26.5h1M31 26.5h1M34 26.5h1M40 26.5h1M67 26.5h2M83 26.5h1M87 26.5h1M97 26.5h1M116 26.5h1M118 26.5h1M141 26.5h1M143 26.5h1M148 26.5h1M163 26.5h1M174 26.5h2M177 26.5h1M182 26.5h1M200 26.5h1M202 26.5h2M208 26.5h2M215 26.5h1M217 26.5h1M219 26.5h1M241 26.5h1M248 26.5h1M0 27.5h2M4 27.5h2M7 27.5h1M18 27.5h3M22 27.5h1M41 27.5h1M43 27.5h1M50 27.5h1M54 27.5h1M56 27.5h1M59 27.5h1M62 27.5h1M73 27.5h1M78 27.5h2M83 27.5h1M87 27.5h1M89 27.5h1M91 27.5h1M95 27.5h2M101 27.5h1M103 27.5h1M111 27.5h1M115 27.5h1M123 27.5h1M125 27.5h3M140 27.5h1M146 27.5h1M149 27.5h2M152 27.5h2M156 27.5h2M162 27.5h1M174 27.5h1M190 27.5h3M195 27.5h1M200 27.5h1M212 27.5h1M218 27.5h1M232 27.5h1M234 27.5h1M239 27.5h1M242 27.5h1M244 27.5h1M252 27.5h2M2 28.5h1M9 28.5h1M29 28.5h1M32 28.5h1M50 28.5h1M54 28.5h2M67 28.5h1M77 28.5h1M80 28.5h1M82 28.5h1M84 28.5h1M86 28.5h1M105 28.5h1M119 28.5h1M129 28.5h2M135 28.5h1M142 28.5h1M145 28.5h1M147 28.5h1M152 28.5h1M154 28.5h1M158 28.5h1M164 28.5h1M170 28.5h1M174 28.5h2M178 28.5h1M185 28.5h1M188 28.5h1M193 28.5h1M205 28.5h1M208 28.5h1M232 28.5h2M238 28.5h1M241 28.5h2M244 28.5h1M249 28.5h1M0 29.5h1M3 29.5h1M17 29.5h1M26 29.5h1M53 29.5h1M56 29.5h1M74 29.5h1M76 29.5h1M81 29.5h3M102 29.5h1M106 29.5h1M109 29.5h1M122 29.5h1M127 29.5h1M146 29.5h1M151 29.5h1M154 29.5h2M163 29.5h2M166 29.5h1M174 29.5h1M176 29.5h1M183 29.5h1M185 29.5h2M188 29.5h1M191 29.5h1M194 29.5h1M202 29.5h2M205 29.5h1M207 29.5h2M211 29.5h1M230 29.5h1M234 29.5h1M244 29.5h1M246 29.5h1M251 29.5h1M14 30.5h1M24 30.5h1M27 30.5h1M30 30.5h3M35 30.5h1M37 30.5h1M39 30.5h2M44 30.5h1M50 30.5h1M54 30.5h1M59 30.5h1M70 30.5h1M73 30.5h1M76 30.5h2M88 30.5h1M93 30.5h1M96 30.5h1M100 30.5h1M105 30.5h2M108 30.5h1M117 30.5h2M121 30.5h1M132 30.5h1M136 30.5h2M143 30.5h1M150 30.5h1M152 30.5h2M158 30.5h1M160 30.5h1M162 30.5h1M170 30.5h1M178 30.5h1M186 30.5h2M191 30.5h2M201 30.5h1M205 30.5h1M210 30.5h1M215 30.5h1M220 30.5h1M222 30.5h1M229 30.5h2M245 30.5h1M247 30.5h1M249 30.5h1M252 30.5h1M3 31.5h1M5 31.5h1M16 31.5h1M18 31.5h1M25 31.5h4M32 31.5h1M35 31.5h1M74 31.5h2M77 31.5h1M80 31.5h1M83 31.5h1M86 31.5h1M95 31.5h1M102 31.5h1M105 31.5h1M113 31.5h1M116 31.5h2M119 31.5h1M125 31.5h1M132 31.5h1M134 31.5h2M143 31.5h1M146 31.5h2M162 31.5h1M164 31.5h2M178 31.5h3M183 31.5h1M188 31.5h2M191 31.5h1M197 31.5h1M202 31.5h1M204 31.5h1M206 31.5h1M212 31.5h1M218 31.5h1M231 31.5h2M239 31.5h1M251 31.5h2M4 32.5h1M8 32.5h1M14 32.5h1M26 32.5h1M31 32.5h1M43 32.5h1M50 32.5h1M52 32.5h3M61 32.5h1M64 32.5h1M67 32.5h1M75 32.5h1M84 32.5h2M91 32.5h1M100 32.5h1M102 32.5h1M104 32.5h1M113 32.5h1M120 32.5h1M125 32.5h3M129 32.5h3M139 32.5h1M145 32.5h1M148 32.5h2M152 32.5h1M154 32.5h1M156 32.5h3M161 32.5h1M166 32.5h1M168 32.5h1M179 32.5h1M187 32.5h3M205 32.5h1M207 32.5h1M212 32.5h1M218 32.5h1M225 32.5h1M230 32.5h1M240 32.5h1M246 32.5h1M250 32.5h3M0 33.5h1M2 33.5h2M6 33.5h1M11 33.5h1M13 33.5h1M16 33.5h1M20 33.5h1M31 33.5h1M35 33.5h1M40 33.5h1M42 33.5h1M47 33.5h1M50 33.5h1M58 33.5h1M70 33.5h1M78 33.5h1M81 33.5h2M89 33.5h1M91 33.5h1M99 33.5h1M106 33.5h1M121 33.5h1M125 33.5h2M132 33.5h2M141 33.5h1M152 33.5h1M162 33.5h2M168 33.5h1M173 33.5h1M176 33.5h1M178 33.5h1M191 33.5h1M193 33.5h1M196 33.5h1M198 33.5h3M216 33.5h2M235 33.5h1M7 34.5h1M10 34.5h2M14 34.5h1M23 34.5h1M34 34.5h1M62 34.5h1M68 34.5h2M73 34.5h6M87 34.5h1M89 34.5h1M91 34.5h1M98 34.5h1M100 34.5h1M102 34.5h1M104 34.5h1M109 34.5h1M122 34.5h1M128 34.5h1M138 34.5h1M144 34.5h2M148 34.5h1M155 34.5h4M166 34.5h2M169 34.5h2M177 34.5h1M198 34.5h1M206 34.5h3M211 34.5h1M214 34.5h1M220 34.5h1M225 34.5h1M229 34.5h1M244 34.5h1M246 34.5h1M252 34.5h1M255 34.5h1M10 35.5h1M20 35.5h1M26 35.5h1M30 35.5h1M38 35.5h1M40 35.5h1M43 35.5h1M47 35.5h2M50 35.5h1M57 35.5h1M80 35.5h1M98 35.5h1M103 35.5h1M106 35.5h1M109 35.5h2M118 35.5h1M137 35.5h3M146 35.5h1M153 35.5h1M157 35.5h1M161 35.5h1M164 35.5h1M167 35.5h1M172 35.5h1M178 35.5h2M181 35.5h1M189 35.5h1M193 35.5h1M195 35.5h1M212 35.5h1M214 35.5h1M224 35.5h1M231 35.5h2M235 35.5h1M238 35.5h1M246 35.5h1M249 35.5h1M7 36.5h1M11 36.5h2M14 36.5h1M21 36.5h1M24 36.5h1M36 36.5h1M41 36.5h1M46 36.5h2M54 36.5h1M62 36.5h1M64 36.5h2M69 36.5h1M73 36.5h1M75 36.5h1M86 36.5h3M93 36.5h1M96 36.5h1M99 36.5h1M103 36.5h1M106 36.5h1M112 36.5h1M117 36.5h1M119 36.5h1M125 36.5h1M130 36.5h1M132 36.5h2M139 36.5h1M142 36.5h2M146 36.5h3M150 36.5h1M155 36.5h2M158 36.5h1M164 36.5h1M166 36.5h1M170 36.5h3M176 36.5h1M188 36.5h1M190 36.5h1M197 36.5h1M202 36.5h1M204 36.5h2M207 36.5h1M216 36.5h1M218 36.5h1M224 36.5h1M227 36.5h1M230 36.5h1M234 36.5h1M244 36.5h1M248 36.5h1M17 37.5h2M21 37.5h1M23 37.5h1M37 37.5h1M43 37.5h1M50 37.5h2M62 37.5h1M77 37.5h1M79 37.5h3M87 37.5h1M90 37.5h3M98 37.5h1M102 37.5h1M106 37.5h3M117 37.5h1M134 37.5h1M138 37.5h2M141 37.5h1M144 37.5h1M152 37.5h3M158 37.5h1M163 37.5h2M170 37.5h1M181 37.5h1M184 37.5h1M190 37.5h1M207 37.5h1M215 37.5h1M222 37.5h1M225 37.5h1M233 37.5h1M235 37.5h1M243 37.5h1M246 37.5h1M248 37.5h2M252 37.5h1M7 38.5h1M15 38.5h3M21 38.5h1M32 38.5h1M38 38.5h1M40 38.5h1M43 38.5h1M51 38.5h1M53 38.5h1M56 38.5h1M59 38.5h1M66 38.5h1M72 38.5h2M78 38.5h1M89 38.5h1M91 38.5h1M94 38.5h1M98 38.5h1M118 38.5h1M122 38.5h1M126 38.5h1M130 38.5h1M140 38.5h1M143 38.5h1M159 38.5h2M168 38.5h1M172 38.5h2M176 38.5h1M208 38.5h1M210 38.5h1M212 38.5h1M214 38.5h1M218 38.5h2M226 38.5h1M229 38.5h1M231 38.5h1M235 38.5h1M239 38.5h2M244 38.5h1M247 38.5h1M251 38.5h1M5 39.5h2M8 39.5h1M12 39.5h1M22 39.5h2M32 39.5h1M36 39.5h1M38 39.5h1M43 39.5h1M48 39.5h1M55 39.5h1M62 39.5h2M65 39.5h1M73 39.5h2M79 39.5h1M81 39.5h3M85 39.5h2M91 39.5h1M95 39.5h1M97 39.5h2M100 39.5h1M105 39.5h1M107 39.5h1M122 39.5h1M125 39.5h2M144 39.5h1M146 39.5h1M150 39.5h3M156 39.5h1M167 39.5h1M173 39.5h1M176 39.5h1M181 39.5h1M195 39.5h1M197 39.5h1M199 39.5h1M207 39.5h2M214 39.5h1M218 39.5h2M225 39.5h1M227 39.5h1M229 39.5h1M234 39.5h2M251 39.5h1" stroke="#248c8c" stroke-width="1.02" fill="none"/>
<path d="M5 0.5h1M12 0.5h2M17 0.5h2M26 0.5h1M33 0.5h1M48 0.5h1M52 0.5h1M54 0.5h1M57 0.5h1M61 0.5h1M74 0.5h1M80 0.5h2M83 0.5h2M103 0.5h1M108 0.5h4M114 0.5h1M116 0.5h1M128 0.5h1M131 0.5h1M145 0.5h2M154 0.5h1M158 0.5h1M178 0.5h1M181 0.5h2M192 0.5h1M194 0.5h1M198 0.5h1M200 0.5h1M209 0.5h1M211 0.5h1M213 0.5h1M217 0.5h1M223 0.5h1M230 0.5h1M234 0.5h1M246 0.5h1M251 0.5h1M255 0.5h1M2 1.5h1M4 1.5h1M7 1.5h2M10 1.5h1M35 1.5h2M42 1.5h1M46 1.5h1M57 1.5h1M65 1.5h1M81 1.5h1M90 1.5h1M101 1.5h1M133 1.5h1M157 1.5h2M161 1.5h1M168 1.5h1M176 1.5h2M183 1.5h2M186 1.5h1M198 1.5h1M201 1.5h1M205 1.5h1M208 1.5h2M212 1.5h1M217 1.5h2M221 1.5h2M225 1.5h2M230 1.5h1M237 1.5h1M239 1.5h1M241 1.5h1M245 1.5h1M247 1.5h1M251 1.5h2M254 1.5h1M3 2.5h1M15 2.5h1M55 2.5h1M61 2.5h4M68 2.5h6M75 2.5h1M77 2.5h2M80 2.5h1M82 2.5h3M88 2.5h2M91 2.5h1M102 2.5h1M107 2.5h1M109 2.5h1M112 2.5h3M123 2.5h3M127 2.5h1M130 2.5h1M134 2.5h1M139 2.5h2M142 2.5h1M152 2.5h1M158 2.5h1M161 2.5h1M171 2.5h1M173 2.5h1M185 2.5h1M196 2.5h1M198 2.5h1M201 2.5h1M209 2.5h4M216 2.5h1M224 2.5h1M232 2.5h1M239 2.5h1M244 2.5h1M247 2.5h1M250 2.5h4M0 3.5h1M5 3.5h1M7 3.5h1M10 3.5h1M21 3.5h2M28 3.5h1M31 3.5h2M44 3.5h1M46 3.5h1M62 3.5h1M72 3.5h1M77 3.5h1M82 3.5h2M86 3.5h1M89 3.5h1M92 3.5h1M96 3.5h1M98 3.5h1M115 3.5h1M123 3.5h1M126 3.5h1M131 3.5h2M138 3.5h2M165 3.5h1M170 3.5h3M178 3.5h1M186 3.5h4M195 3.5h1M202 3.5h1M208 3.5h1M1 4.5h3M6 4.5h2M17 4.5h1M22 4.5h2M28 4.5h1M31 4.5h1M37 4.5h1M41 4.5h1M55 4.5h1M60 4.5h2M79 4.5h1M85 4.5h1M97 4.5h2M105 4.5h2M111 4.5h1M114 4.5h3M119 4.5h1M121 4.5h1M124 4.5h1M126 4.5h2M132 4.5h1M136 4.5h1M139 4.5h1M141 4.5h1M143 4.5h1M152 4.5h1M155 4.5h2M161 4.5h2M176 4.5h1M187 4.5h1M192 4.5h1M202 4.5h1M206 4.5h1M220 4.5h1M222 4.5h1M240 4.5h2M249 4.5h1M255 4.5h1M2 5.5h1M5 5.5h1M9 5.5h1M12 5.5h2M19 5.5h1M36 5.5h1M44 5.5h1M46 5.5h1M60 5.5h1M66 5.5h3M72 5.5h1M77 5.5h3M82 5.5h1M87 5.5h1M90 5.5h1M103 5.5h1M110 5.5h1M116 5.5h1M127 5.5h1M129 5.5h1M135 5.5h1M141 5.5h1M143 5.5h1M146 5.5h1M149 5.5h1M156 5.5h1M160 5.5h2M166 5.5h2M174 5.5h1M176 5.5h2M179 5.5h1M181 5.5h1M186 5.5h1M195 5.5h2M198 5.5h1M231 5.5h2M239 5.5h1M242 5.5h2M12 6.5h1M19 6.5h1M35 6.5h1M41 6.5h1M44 6.5h2M50 6.5h1M56 6.5h3M67 6.5h1M75 6.5h1M77 6.5h1M85 6.5h1M88 6.5h1M104 6.5h2M113 6.5h1M116 6.5h1M121 6.5h1M124 6.5h1M129 6.5h1M143 6.5h1M145 6.5h1M148 6.5h2M160 6.5h1M167 6.5h1M173 6.5h1M183 6.5h1M191 6.5h2M195 6.5h1M198 6.5h2M202 6.5h2M210 6.5h1M218 6.5h1M220 6.5h2M238 6.5h1M251 6.5h1M0 7.5h1M4 7.5h1M11 7.5h1M31 7.5h1M35 7.5h1M48 7.5h1M53 7.5h1M61 7.5h1M63 7.5h1M67 7.5h1M71 7.5h2M83 7.5h1M85 7.5h1M92 7.5h1M101 7.5h1M104 7.5h1M110 7.5h2M113 7.5h1M122 7.5h1M124 7.5h2M131 7.5h1M139 7.5h1M143 7.5h1M150 7.5h1M153 7.5h1M156 7.5h1M163 7.5h1M167 7.5h2M183 7.5h1M185 7.5h1M195 7.5h2M213 7.5h1M215 7.5h1M228 7.5h1M233 7.5h2M244 7.5h1M254 7.5h1M0 8.5h1M2 8.5h1M7 8.5h2M13 8.5h2M20 8.5h5M31 8.5h1M41 8.5h1M46 8.5h1M65 8.5h2M74 8.5h1M77 8.5h1M84 8.5h1M88 8.5h1M91 8.5h2M94 8.5h1M111 8.5h1M132 8.5h1M143 8.5h3M148 8.5h1M152 8.5h1M161 8.5h1M163 8.5h2M179 8.5h1M183 8.5h1M189 8.5h1M193 8.5h2M198 8.5h4M203 8.5h1M212 8.5h1M214 8.5h2M218 8.5h1M222 8.5h1M243 8.5h1M252 8.5h1M0 9.5h1M3 9.5h3M7 9.5h3M34 9.5h1M37 9.5h2M41 9.5h1M49 9.5h1M62 9.5h2M69 9.5h1M83 9.5h4M88 9.5h1M94 9.5h1M96 9.5h2M99 9.5h2M103 9.5h1M105 9.5h1M107 9.5h1M115 9.5h2M127 9.5h1M130 9.5h1M135 9.5h1M140 9.5h1M154 9.5h1M156 9.5h1M162 9.5h1M169 9.5h1M190 9.5h1M199 9.5h1M208 9.5h1M214 9.5h2M218 9.5h1M240 9.5h1M250 9.5h1M1 10.5h2M6 10.5h2M16 10.5h2M19 10.5h1M30 10.5h1M41 10.5h1M45 10.5h1M52 10.5h2M56 10.5h2M61 10.5h2M72 10.5h2M77 10.5h2M80 10.5h1M82 10.5h1M88 10.5h1M91 10.5h1M103 10.5h1M106 10.5h1M112 10.5h2M118 10.5h1M122 10.5h2M127 10.5h1M129 10.5h1M132 10.5h1M134 10.5h1M136 10.5h1M139 10.5h2M149 10.5h1M159 10.5h1M168 10.5h1M172 10.5h2M175 10.5h3M180 10.5h1M182 10.5h1M188 10.5h1M192 10.5h1M198 10.5h1M204 10.5h3M211 10.5h1M213 10.5h1M221 10.5h1M224 10.5h1M227 10.5h1M240 10.5h2M249 10.5h1M0 11.5h1M9 11.5h1M12 11.5h1M15 11.5h1M21 11.5h1M23 11.5h1M25 11.5h1M38 11.5h1M46 11.5h1M52 11.5h1M55 11.5h1M57 11.5h1M61 11.5h2M68 11.5h1M76 11.5h1M79 11.5h1M88 11.5h1M91 11.5h1M95 11.5h3M104 11.5h2M108 11.5h2M112 11.5h1M125 11.5h2M137 11.5h2M146 11.5h1M164 11.5h2M168 11.5h1M172 11.5h1M179 11.5h2M182 11.5h1M197 11.5h1M203 11.5h2M207 11.5h1M213 11.5h2M230 11.5h1M235 11.5h2M243 11.5h3M1 12.5h2M9 12.5h1M22 12.5h1M36 12.5h1M41 12.5h1M43 12.5h2M49 12.5h1M62 12.5h2M65 12.5h1M69 12.5h1M78 12.5h1M84 12.5h2M91 12.5h1M95 12.5h1M100 12.5h1M121 12.5h1M124 12.5h1M130 12.5h1M132 12.5h1M140 12.5h3M147 12.5h1M150 12.5h2M154 12.5h1M175 12.5h2M181 12.5h1M183 12.5h2M186 12.5h3M206 12.5h2M216 12.5h2M221 12.5h2M230 12.5h1M232 12.5h2M240 12.5h1M251 12.5h1M4 13.5h1M6 13.5h1M9 13.5h1M11 13.5h1M19 13.5h1M27 13.5h1M29 13.5h2M34 13.5h1M40 13.5h2M51 13.5h1M54 13.5h1M56 13.5h1M66 13.5h1M70 13.5h2M73 13.5h1M80 13.5h1M92 13.5h1M96 13.5h2M105 13.5h1M110 13.5h2M121 13.5h1M128 13.5h1M137 13.5h1M145 13.5h1M152 13.5h1M161 13.5h2M166 13.5h3M184 13.5h1M186 13.5h1M189 13.5h1M204 13.5h2M209 13.5h1M214 13.5h1M219 13.5h1M225 13.5h1M236 13.5h4M0 14.5h1M15 14.5h1M21 14.5h1M32 14.5h1M37 14.5h1M40 14.5h1M48 14.5h2M58 14.5h1M64 14.5h1M72 14.5h2M81 14.5h1M93 14.5h1M97 14.5h2M104 14.5h1M106 14.5h2M110 14.5h1M113 14.5h1M123 14.5h1M132 14.5h3M142 14.5h1M144 14.5h1M148 14.5h1M151 14.5h1M157 14.5h2M166 14.5h1M177 14.5h1M191 14.5h2M194 14.5h1M198 14.5h1M203 14.5h1M205 14.5h1M209 14.5h1M213 14.5h2M221 14.5h1M226 14.5h1M231 14.5h1M234 14.5h1M238 14.5h1M247 14.5h2M254 14.5h1M0 15.5h1M12 15.5h1M18 15.5h1M25 15.5h1M28 15.5h1M31 15.5h1M34 15.5h2M46 15.5h2M49 15.5h2M66 15.5h1M70 15.5h1M82 15.5h1M88 15.5h1M95 15.5h1M97 15.5h3M117 15.5h2M122 15.5h2M134 15.5h1M140 15.5h2M145 15.5h1M148 15.5h4M160 15.5h1M166 15.5h2M170 15.5h1M172 15.5h1M176 15.5h1M187 15.5h1M189 15.5h1M191 15.5h1M196 15.5h2M205 15.5h1M207 15.5h2M214 15.5h1M216 15.5h1M223 15.5h1M229 15.5h1M231 15.5h1M237 15.5h1M242 15.5h1M245 15.5h1M2 16.5h1M9 16.5h1M18 16.5h2M22 16.5h1M33 16.5h1M36 16.5h1M39 16.5h1M50 16.5h2M55 16.5h1M59 16.5h1M63 16.5h2M69 16.5h2M73 16.5h2M81 16.5h1M91 16.5h1M99 16.5h1M101 16.5h1M106 16.5h2M109 16.5h2M121 16.5h1M127 16.5h2M134 16.5h1M138 16.5h2M143 16.5h1M146 16.5h1M156 16.5h2M160 16.5h1M164 16.5h1M174 16.5h2M181 16.5h2M188 16.5h3M200 16.5h1M205 16.5h1M214 16.5h1M218 16.5h1M221 16.5h1M225 16.5h1M230 16.5h1M234 16.5h1M237 16.5h2M243 16.5h1M249 16.5h1M4 17.5h2M19 17.5h1M29 17.5h1M34 17.5h6M52 17.5h1M56 17.5h2M64 17.5h1M66 17.5h1M69 17.5h1M75 17.5h2M85 17.5h3M89 17.5h1M101 17.5h1M106 17.5h1M112 17.5h2M116 17.5h1M118 17.5h1M120 17.5h2M126 17.5h1M128 17.5h1M131 17.5h2M137 17.5h2M158 17.5h1M165 17.5h1M172 17.5h2M181 17.5h1M189 17.5h1M193 17.5h1M210 17.5h1M214 17.5h1M221 17.5h1M232 17.5h1M237 17.5h2M240 17.5h1M249 17.5h1M251 17.5h1M14 18.5h2M21 18.5h1M25 18.5h2M33 18.5h2M52 18.5h2M66 18.5h2M73 18.5h1M83 18.5h1M86 18.5h1M94 18.5h1M96 18.5h1M102 18.5h1M105 18.5h1M115 18.5h2M120 18.5h1M123 18.5h2M142 18.5h1M150 18.5h1M157 18.5h2M161 18.5h1M169 18.5h1M174 18.5h1M176 18.5h1M180 18.5h1M184 18.5h1M187 18.5h3M191 18.5h1M193 18.5h2M201 18.5h1M214 18.5h1M227 18.5h1M236 18.5h1M240 18.5h1M242 18.5h1M247 18.5h1M250 18.5h1M252 18.5h1M0 19.5h1M11 19.5h1M26 19.5h1M28 19.5h1M31 19.5h1M44 19.5h1M53 19.5h1M60 19.5h3M65 19.5h1M68 19.5h1M70 19.5h1M73 19.5h1M75 19.5h1M84 19.5h2M96 19.5h1M98 19.5h1M117 19.5h1M120 19.5h1M135 19.5h1M137 19.5h1M145 19.5h1M149 19.5h1M153 19.5h2M167 19.5h1M169 19.5h2M197 19.5h1M226 19.5h1M228 19.5h1M231 19.5h1M236 19.5h1M239 19.5h1M1 20.5h1M4 20.5h1M7 20.5h1M10 20.5h1M14 20.5h1M21 20.5h1M24 20.5h1M29 20.5h1M35 20.5h4M42 20.5h1M52 20.5h1M57 20.5h1M70 20.5h1M76 20.5h2M84 20.5h1M86 20.5h1M92 20.5h2M96 20.5h2M106 20.5h1M108 20.5h1M111 20.5h1M119 20.5h1M121 20.5h1M133 20.5h3M142 20.5h1M147 20.5h2M152 20.5h1M158 20.5h4M171 20.5h2M174 20.5h1M180 20.5h1M187 20.5h1M190 20.5h1M196 20.5h1M199 20.5h1M204 20.5h1M207 20.5h2M213 20.5h1M215 20.5h1M218 20.5h1M220 20.5h1M226 20.5h1M234 20.5h3M238 20.5h2M247 20.5h3M254 20.5h1M11 21.5h2M21 21.5h1M23 21.5h1M25 21.5h1M28 21.5h1M30 21.5h2M42 21.5h1M49 21.5h1M51 21.5h1M56 21.5h2M64 21.5h1M66 21.5h1M71 21.5h1M73 21.5h1M75 21.5h1M80 21.5h1M83 21.5h1M85 21.5h1M95 21.5h1M98 21.5h2M103 21.5h3M111 21.5h1M146 21.5h1M148 21.5h1M155 21.5h1M157 21.5h1M162 21.5h2M169 21.5h1M187 21.5h1M190 21.5h1M194 21.5h1M206 21.5h1M223 21.5h1M226 21.5h2M229 21.5h1M240 21.5h1M247 21.5h1M0 22.5h1M6 22.5h1M10 22.5h1M20 22.5h1M30 22.5h1M38 22.5h1M46 22.5h2M49 22.5h1M51 22.5h1M58 22.5h1M60 22.5h1M80 22.5h2M85 22.5h1M98 22.5h1M108 22.5h3M112 22.5h2M116 22.5h1M141 22.5h1M148 22.5h1M152 22.5h1M157 22.5h2M172 22.5h2M177 22.5h1M179 22.5h1M185 22.5h1M187 22.5h2M195 22.5h1M199 22.5h1M205 22.5h1M243 22.5h1M255 22.5h1M4 23.5h1M6 23.5h2M19 23.5h1M24 23.5h1M28 23.5h2M31 23.5h1M43 23.5h1M45 23.5h1M50 23.5h1M54 23.5h1M64 23.5h1M70 23.5h1M74 23.5h1M77 23.5h1M79 23.5h1M81 23.5h2M92 23.5h1M106 23.5h1M110 23.5h1M112 23.5h1M126 23.5h2M132 23.5h1M134 23.5h1M137 23.5h2M140 23.5h2M150 23.5h1M158 23.5h2M162 23.5h1M170 23.5h1M178 23.5h2M182 23.5h1M187 23.5h2M203 23.5h1M216 23.5h1M219 23.5h1M221 23.5h3M226 23.5h1M235 23.5h1M241 23.5h2M255 23.5h1M0 24.5h1M5 24.5h1M10 24.5h1M17 24.5h1M20 24.5h1M42 24.5h2M51 24.5h1M56 24.5h2M77 24.5h1M82 24.5h1M90 24.5h2M96 24.5h1M100 24.5h1M109 24.5h1M112 24.5h1M118 24.5h1M123 24.5h1M126 24.5h1M128 24.5h2M135 24.5h1M137 24.5h1M141 24.5h1M158 24.5h1M169 24.5h1M176 24.5h1M187 24.5h1M194 24.5h2M206 24.5h1M214 24.5h1M217 24.5h1M220 24.5h1M238 24.5h2M245 24.5h1M254 24.5h1M0 25.5h1M3 25.5h1M21 25.5h1M28 25.5h1M35 25.5h1M38 25.5h1M46 25.5h2M59 25.5h3M71 25.5h2M79 25.5h1M85 25.5h2M90 25.5h1M97 25.5h1M100 25.5h2M104 25.5h1M124 25.5h1M133 25.5h1M139 25.5h1M141 25.5h2M150 25.5h3M156 25.5h2M171 25.5h1M176 25.5h1M180 25.5h2M188 25.5h2M193 25.5h1M196 25.5h1M201 25.5h2M210 25.5h1M214 25.5h1M220 25.5h3M236 25.5h1M238 25.5h4M2 26.5h1M29 26.5h2M35 26.5h1M49 26.5h2M65 26.5h1M75 26.5h1M77 26.5h2M84 26.5h1M90 26.5h1M93 26.5h1M115 26.5h1M119 26.5h1M123 26.5h2M126 26.5h5M134 26.5h1M139 26.5h1M144 26.5h1M153 26.5h1M161 26.5h1M164 26.5h1M166 26.5h1M172 26.5h1M176 26.5h1M191 26.5h1M199 26.5h1M206 26.5h1M210 26.5h1M212 26.5h2M220 26.5h1M222 26.5h1M228 26.5h1M232 26.5h1M237 26.5h1M239 26.5h2M242 26.5h5M250 26.5h2M254 26.5h1M3 27.5h1M6 27.5h1M10 27.5h2M34 27.5h1M37 27.5h1M45 27.5h1M52 27.5h1M57 27.5h2M63 27.5h1M66 27.5h1M75 27.5h1M77 27.5h1M81 27.5h2M84 27.5h1M88 27.5h1M97 27.5h2M104 27.5h1M106 27.5h1M114 27.5h1M118 27.5h1M122 27.5h1M129 27.5h1M131 27.5h1M142 27.5h1M144 27.5h1M148 27.5h1M159 27.5h1M165 27.5h1M171 27.5h1M188 27.5h2M198 27.5h1M202 27.5h2M205 27.5h1M207 27.5h2M216 27.5h2M222 27.5h1M227 27.5h1M243 27.5h1M251 27.5h1M254 27.5h2M15 28.5h1M18 28.5h1M21 28.5h2M24 28.5h1M26 28.5h1M28 28.5h1M30 28.5h2M37 28.5h1M42 28.5h1M53 28.5h1M57 28.5h2M65 28.5h2M69 28.5h3M74 28.5h2M83 28.5h1M90 28.5h2M93 28.5h1M99 28.5h1M101 28.5h1M104 28.5h1M107 28.5h1M112 28.5h1M127 28.5h1M132 28.5h1M144 28.5h1M146 28.5h1M149 28.5h1M155 28.5h1M157 28.5h1M160 28.5h1M165 28.5h1M176 28.5h2M179 28.5h2M183 28.5h1M187 28.5h1M190 28.5h1M192 28.5h1M194 28.5h2M197 28.5h2M222 28.5h2M246 28.5h3M251 28.5h1M6 29.5h1M8 29.5h2M14 29.5h2M19 29.5h1M21 29.5h4M31 29.5h1M34 29.5h2M47 29.5h1M49 29.5h1M51 29.5h2M58 29.5h3M65 29.5h2M77 29.5h2M88 29.5h1M90 29.5h1M92 29.5h2M95 29.5h1M97 29.5h1M100 29.5h1M105 29.5h1M110 29.5h3M115 29.5h1M120 29.5h1M129 29.5h1M133 29.5h2M145 29.5h1M148 29.5h1M150 29.5h1M157 29.5h1M160 29.5h2M171 29.5h1M180 29.5h2M190 29.5h1M201 29.5h1M219 29.5h1M223 29.5h2M235 29.5h1M237 29.5h1M241 29.5h2M249 29.5h1M253 29.5h1M2 30.5h1M5 30.5h2M8 30.5h2M15 30.5h1M17 30.5h1M28 30.5h2M55 30.5h2M72 30.5h1M78 30.5h2M81 30.5h1M89 30.5h1M94 30.5h1M98 30.5h1M103 30.5h2M107 30.5h1M111 30.5h1M115 30.5h2M125 30.5h2M139 30.5h1M141 30.5h1M145 30.5h1M156 30.5h1M167 30.5h2M176 30.5h1M179 30.5h1M184 30.5h1M193 30.5h2M202 30.5h2M217 30.5h1M223 30.5h3M232 30.5h1M234 30.5h1M236 30.5h2M240 30.5h1M242 30.5h1M12 31.5h1M15 31.5h1M20 31.5h1M22 31.5h1M41 31.5h1M45 31.5h2M49 31.5h1M53 31.5h2M67 31.5h2M78 31.5h1M87 31.5h1M96 31.5h2M100 31.5h1M123 31.5h1M126 31.5h2M130 31.5h1M149 31.5h1M161 31.5h1M167 31.5h1M169 31.5h3M173 31.5h1M175 31.5h2M185 31.5h1M193 31.5h1M201 31.5h1M209 31.5h1M211 31.5h1M213 31.5h1M215 31.5h3M220 31.5h1M227 31.5h1M229 31.5h1M235 31.5h1M237 31.5h2M240 31.5h4M247 31.5h1M254 31.5h2M5 32.5h1M12 32.5h1M16 32.5h2M20 32.5h2M35 32.5h1M41 32.5h1M57 32.5h1M69 32.5h1M72 32.5h1M82 32.5h1M86 32.5h2M90 32.5h1M92 32.5h4M105 32.5h1M119 32.5h1M133 32.5h3M138 32.5h1M140 32.5h1M143 32.5h1M150 32.5h1M162 32.5h1M181 32.5h1M184 32.5h1M193 32.5h1M200 32.5h1M203 32.5h1M220 32.5h1M231 32.5h2M235 32.5h1M242 32.5h2M247 32.5h1M253 32.5h1M255 32.5h1M8 33.5h1M14 33.5h2M19 33.5h1M21 33.5h1M27 33.5h1M32 33.5h2M59 33.5h1M61 33.5h3M73 33.5h1M76 33.5h1M79 33.5h1M85 33.5h1M93 33.5h2M96 33.5h1M98 33.5h1M103 33.5h2M107 33.5h1M113 33.5h1M117 33.5h1M120 33.5h1M128 33.5h1M131 33.5h1M134 33.5h2M143 33.5h1M147 33.5h1M153 33.5h2M170 33.5h1M180 33.5h1M184 33.5h1M209 33.5h2M212 33.5h1M215 33.5h1M219 33.5h1M230 33.5h1M237 33.5h1M250 33.5h1M252 33.5h2M255 33.5h1M3 34.5h2M15 34.5h1M18 34.5h1M29 34.5h1M38 34.5h2M46 34.5h1M51 34.5h1M54 34.5h1M63 34.5h2M80 34.5h1M86 34.5h1M90 34.5h1M93 34.5h2M97 34.5h1M105 34.5h1M121 34.5h1M123 34.5h1M126 34.5h1M139 34.5h1M147 34.5h1M153 34.5h1M179 34.5h1M188 34.5h2M191 34.5h1M195 34.5h1M202 34.5h1M209 34.5h1M219 34.5h1M221 34.5h2M226 34.5h2M236 34.5h2M239 34.5h1M242 34.5h1M247 34.5h1M1 35.5h1M5 35.5h3M13 35.5h2M21 35.5h1M25 35.5h1M33 35.5h1M45 35.5h1M51 35.5h2M58 35.5h2M72 35.5h1M74 35.5h1M99 35.5h2M108 35.5h1M111 35.5h1M114 35.5h1M120 35.5h1M130 35.5h1M132 35.5h1M144 35.5h1M150 35.5h1M171 35.5h1M177 35.5h1M187 35.5h1M192 35.5h1M202 35.5h1M213 35.5h1M216 35.5h1M220 35.5h1M228 35.5h1M236 35.5h1M243 35.5h1M248 35.5h1M251 35.5h1M0 36.5h2M3 36.5h2M15 36.5h2M25 36.5h1M35 36.5h1M39 36.5h2M55 36.5h1M57 36.5h3M66 36.5h1M70 36.5h2M91 36.5h1M101 36.5h1M120 36.5h4M126 36.5h1M141 36.5h1M159 36.5h1M162 36.5h1M169 36.5h1M193 36.5h1M210 36.5h2M213 36.5h3M217 36.5h1M222 36.5h1M226 36.5h1M228 36.5h1M233 36.5h1M246 36.5h1M253 36.5h2M5 37.5h1M16 37.5h1M19 37.5h1M24 37.5h3M31 37.5h1M40 37.5h1M48 37.5h2M57 37.5h1M65 37.5h1M71 37.5h2M75 37.5h1M82 37.5h1M97 37.5h1M105 37.5h1M113 37.5h1M119 37.5h2M128 37.5h2M137 37.5h1M140 37.5h1M146 37.5h2M160 37.5h3M179 37.5h2M203 37.5h3M208 37.5h1M217 37.5h1M220 37.5h2M236 37.5h1M239 37.5h1M244 37.5h1M250 37.5h1M253 37.5h3M0 38.5h1M5 38.5h1M11 38.5h1M14 38.5h1M18 38.5h1M25 38.5h1M30 38.5h1M46 38.5h5M57 38.5h2M62 38.5h1M64 38.5h2M83 38.5h1M97 38.5h1M104 38.5h3M111 38.5h1M115 38.5h1M117 38.5h1M119 38.5h2M128 38.5h2M132 38.5h1M136 38.5h1M139 38.5h1M144 38.5h2M154 38.5h1M161 38.5h1M164 38.5h1M167 38.5h1M169 38.5h2M177 38.5h1M192 38.5h1M194 38.5h1M200 38.5h1M216 38.5h1M223 38.5h2M227 38.5h1M234 38.5h1M246 38.5h1M254 38.5h1M7 39.5h1M18 39.5h1M21 39.5h1M25 39.5h1M28 39.5h1M33 39.5h1M49 39.5h1M52 39.5h1M57 39.5h1M59 39.5h1M68 39.5h1M70 39.5h1M76 39.5h1M87 39.5h3M93 39.5h1M99 39.5h1M102 39.5h1M110 39.5h2M114 39.5h1M124 39.5h1M127 39.5h2M130 39.5h1M134 39.5h3M145 39.5h1M161 39.5h3M169 39.5h1M171 39.5h1M180 39.5h1M182 39.5h1M187 39.5h1M196 39.5h1M209 39.5h1M212 39.5h1M216 39.5h2M230 39.5h1M243 39.5h1M245 39.5h2M250 39.5h1" stroke="#1f9e89" stroke-width="1.02" fill="none"/>
<path d="M6 0.5h2M9 0.5h1M27 0.5h1M36 0.5h1M47 0.5h1M65 0.5h1M75 0.5h1M106 0.5h1M132 0.5h1M191 0.5h1M193 0.5h1M195 0.5h1M197 0.5h1M208 0.5h1M222 0.5h1M231 0.5h1M247 0.5h1M250 0.5h1M254 0.5h1M3 1.5h1M41 1.5h1M48 1.5h2M53 1.5h1M67 1.5h1M87 1.5h3M94 1.5h1M107 1.5h2M119 1.5h1M122 1.5h2M131 1.5h2M139 1.5h1M162 1.5h1M170 1.5h1M172 1.5h1M199 1.5h1M202 1.5h1M206 1.5h1M228 1.5h2M238 1.5h1M248 1.5h1M253 1.5h1M0 2.5h1M6 2.5h2M54 2.5h1M65 2.5h1M81 2.5h1M87 2.5h1M90 2.5h1M95 2.5h2M108 2.5h1M118 2.5h2M126 2.5h1M129 2.5h1M143 2.5h2M149 2.5h1M151 2.5h1M162 2.5h2M165 2.5h6M182 2.5h3M199 2.5h1M218 2.5h1M233 2.5h1M240 2.5h2M254 2.5h1M4 3.5h1M18 3.5h1M24 3.5h2M29 3.5h2M73 3.5h1M105 3.5h1M121 3.5h1M127 3.5h1M136 3.5h2M140 3.5h1M164 3.5h1M193 3.5h1M207 3.5h1M223 3.5h2M240 3.5h2M246 3.5h2M18 4.5h2M38 4.5h2M86 4.5h1M95 4.5h1M104 4.5h1M140 4.5h1M142 4.5h1M159 4.5h2M170 4.5h1M199 4.5h1M203 4.5h1M242 4.5h2M250 4.5h1M254 4.5h1M3 5.5h1M11 5.5h1M20 5.5h1M23 5.5h1M45 5.5h1M50 5.5h1M56 5.5h1M70 5.5h1M80 5.5h2M85 5.5h2M89 5.5h1M91 5.5h1M111 5.5h1M121 5.5h2M128 5.5h1M142 5.5h1M145 5.5h1M148 5.5h1M169 5.5h1M180 5.5h1M230 5.5h1M236 5.5h1M17 6.5h2M32 6.5h1M34 6.5h1M36 6.5h3M72 6.5h2M95 6.5h1M97 6.5h1M112 6.5h1M138 6.5h2M144 6.5h1M146 6.5h2M175 6.5h2M184 6.5h1M196 6.5h1M204 6.5h2M211 6.5h2M224 6.5h1M228 6.5h2M253 6.5h1M12 7.5h1M29 7.5h2M33 7.5h2M77 7.5h2M86 7.5h1M88 7.5h1M106 7.5h1M134 7.5h1M141 7.5h1M151 7.5h1M173 7.5h1M184 7.5h1M201 7.5h1M204 7.5h1M220 7.5h2M225 7.5h1M42 8.5h2M75 8.5h2M80 8.5h1M82 8.5h1M89 8.5h1M95 8.5h1M112 8.5h2M118 8.5h1M135 8.5h1M171 8.5h2M182 8.5h1M197 8.5h1M202 8.5h1M206 8.5h1M213 8.5h1M220 8.5h2M231 8.5h2M250 8.5h1M16 9.5h1M40 9.5h1M89 9.5h1M102 9.5h1M106 9.5h1M136 9.5h1M138 9.5h2M146 9.5h1M148 9.5h1M159 9.5h1M183 9.5h2M186 9.5h1M221 9.5h2M227 9.5h1M241 9.5h2M253 9.5h1M29 10.5h1M46 10.5h2M75 10.5h1M92 10.5h1M104 10.5h2M137 10.5h1M150 10.5h3M163 10.5h1M171 10.5h1M174 10.5h1M181 10.5h1M183 10.5h1M199 10.5h2M208 10.5h2M220 10.5h1M226 10.5h1M230 10.5h3M247 10.5h1M254 10.5h2M1 11.5h1M3 11.5h2M22 11.5h1M56 11.5h1M58 11.5h2M65 11.5h1M89 11.5h2M98 11.5h1M107 11.5h1M128 11.5h3M171 11.5h1M185 11.5h1M200 11.5h2M229 11.5h1M32 12.5h2M122 12.5h1M125 12.5h2M131 12.5h1M144 12.5h1M165 12.5h2M169 12.5h2M192 12.5h2M204 12.5h2M225 12.5h1M239 12.5h1M7 13.5h1M16 13.5h2M47 13.5h1M55 13.5h1M64 13.5h1M67 13.5h1M74 13.5h1M93 13.5h1M126 13.5h2M133 13.5h1M138 13.5h1M140 13.5h2M151 13.5h1M174 13.5h2M190 13.5h1M199 13.5h1M230 13.5h2M18 14.5h2M33 14.5h1M46 14.5h2M56 14.5h2M60 14.5h2M96 14.5h1M115 14.5h2M120 14.5h2M153 14.5h2M167 14.5h1M186 14.5h1M188 14.5h3M206 14.5h1M225 14.5h1M239 14.5h1M251 14.5h2M10 15.5h1M13 15.5h1M19 15.5h2M67 15.5h3M142 15.5h3M168 15.5h1M181 15.5h2M190 15.5h1M195 15.5h1M212 15.5h1M236 15.5h1M239 15.5h3M12 16.5h2M23 16.5h1M58 16.5h1M62 16.5h1M76 16.5h1M80 16.5h1M86 16.5h1M88 16.5h1M142 16.5h1M161 16.5h2M203 16.5h2M207 16.5h1M215 16.5h1M217 16.5h1M231 16.5h1M240 16.5h3M246 16.5h2M250 16.5h2M0 17.5h2M18 17.5h1M46 17.5h1M55 17.5h1M65 17.5h1M71 17.5h1M111 17.5h1M117 17.5h1M159 17.5h1M179 17.5h2M198 17.5h2M204 17.5h1M211 17.5h1M215 17.5h2M234 17.5h1M236 17.5h1M241 17.5h1M0 18.5h1M16 18.5h2M71 18.5h1M79 18.5h1M84 18.5h2M87 18.5h2M91 18.5h2M100 18.5h2M103 18.5h1M106 18.5h2M132 18.5h2M141 18.5h1M144 18.5h1M146 18.5h2M151 18.5h2M166 18.5h3M179 18.5h1M185 18.5h1M202 18.5h1M207 18.5h2M213 18.5h1M230 18.5h1M235 18.5h1M238 18.5h2M241 18.5h1M1 19.5h1M12 19.5h2M32 19.5h1M56 19.5h3M97 19.5h1M119 19.5h1M122 19.5h1M148 19.5h1M182 19.5h2M199 19.5h2M203 19.5h2M212 19.5h2M218 19.5h1M240 19.5h1M244 19.5h1M0 20.5h1M30 20.5h1M44 20.5h2M54 20.5h1M56 20.5h1M61 20.5h1M71 20.5h1M80 20.5h4M107 20.5h1M124 20.5h1M129 20.5h2M143 20.5h2M157 20.5h1M167 20.5h1M175 20.5h1M188 20.5h1M209 20.5h2M221 20.5h1M231 20.5h2M237 20.5h1M253 20.5h1M24 21.5h1M27 21.5h1M40 21.5h1M50 21.5h1M65 21.5h1M74 21.5h1M77 21.5h2M97 21.5h1M121 21.5h1M123 21.5h1M134 21.5h1M143 21.5h2M147 21.5h1M149 21.5h1M188 21.5h2M207 21.5h1M224 21.5h2M228 21.5h1M235 21.5h1M246 21.5h1M3 22.5h2M39 22.5h1M52 22.5h1M54 22.5h1M56 22.5h2M61 22.5h4M86 22.5h1M96 22.5h2M111 22.5h1M142 22.5h2M150 22.5h1M178 22.5h1M194 22.5h1M200 22.5h3M204 22.5h1M228 22.5h1M17 23.5h2M30 23.5h1M37 23.5h1M40 23.5h1M47 23.5h2M66 23.5h1M68 23.5h2M78 23.5h1M85 23.5h1M88 23.5h2M136 23.5h1M153 23.5h1M155 23.5h1M161 23.5h1M193 23.5h2M205 23.5h1M220 23.5h1M253 23.5h2M2 24.5h2M9 24.5h1M15 24.5h1M33 24.5h1M45 24.5h2M54 24.5h1M83 24.5h1M85 24.5h1M97 24.5h1M99 24.5h1M107 24.5h1M110 24.5h1M114 24.5h1M116 24.5h1M122 24.5h1M145 24.5h1M154 24.5h2M157 24.5h1M168 24.5h1M174 24.5h1M205 24.5h1M208 24.5h1M211 24.5h2M218 24.5h2M2 25.5h1M26 25.5h2M52 25.5h1M55 25.5h1M65 25.5h3M80 25.5h1M89 25.5h1M91 25.5h2M105 25.5h1M137 25.5h2M144 25.5h2M172 25.5h2M186 25.5h1M197 25.5h1M208 25.5h1M226 25.5h2M237 25.5h1M253 25.5h1M10 26.5h1M26 26.5h2M36 26.5h1M64 26.5h1M80 26.5h1M89 26.5h1M121 26.5h1M131 26.5h1M133 26.5h1M138 26.5h1M145 26.5h3M165 26.5h1M171 26.5h1M185 26.5h1M205 26.5h1M221 26.5h1M225 26.5h3M231 26.5h1M234 26.5h1M12 27.5h1M33 27.5h1M53 27.5h1M64 27.5h2M85 27.5h1M94 27.5h1M145 27.5h1M147 27.5h1M166 27.5h1M172 27.5h1M182 27.5h1M194 27.5h1M197 27.5h1M204 27.5h1M221 27.5h1M223 27.5h1M228 27.5h1M241 27.5h1M16 28.5h2M23 28.5h1M27 28.5h1M43 28.5h1M72 28.5h2M94 28.5h2M100 28.5h1M111 28.5h1M120 28.5h1M122 28.5h2M126 28.5h1M150 28.5h1M156 28.5h1M168 28.5h2M189 28.5h1M202 28.5h2M206 28.5h2M213 28.5h2M229 28.5h2M245 28.5h1M250 28.5h1M5 29.5h1M32 29.5h2M37 29.5h1M48 29.5h1M64 29.5h1M67 29.5h1M73 29.5h1M87 29.5h1M91 29.5h1M94 29.5h1M103 29.5h1M114 29.5h1M119 29.5h1M128 29.5h1M132 29.5h1M135 29.5h1M137 29.5h1M149 29.5h1M217 29.5h1M236 29.5h1M7 30.5h1M10 30.5h1M63 30.5h1M75 30.5h1M80 30.5h1M95 30.5h1M110 30.5h1M140 30.5h1M157 30.5h1M227 30.5h1M239 30.5h1M241 30.5h1M243 30.5h2M13 31.5h2M21 31.5h1M42 31.5h1M47 31.5h2M88 31.5h2M124 31.5h1M141 31.5h2M150 31.5h1M153 31.5h1M155 31.5h2M160 31.5h1M168 31.5h1M172 31.5h1M194 31.5h1M199 31.5h1M208 31.5h1M214 31.5h1M224 31.5h1M248 31.5h2M1 32.5h2M33 32.5h1M37 32.5h1M39 32.5h2M45 32.5h2M58 32.5h1M73 32.5h1M88 32.5h2M106 32.5h1M141 32.5h2M164 32.5h1M182 32.5h1M194 32.5h4M201 32.5h2M219 32.5h1M234 32.5h1M254 32.5h1M18 33.5h1M64 33.5h2M71 33.5h1M74 33.5h1M77 33.5h1M86 33.5h2M92 33.5h1M97 33.5h1M108 33.5h1M118 33.5h2M123 33.5h1M130 33.5h1M136 33.5h3M158 33.5h1M179 33.5h1M183 33.5h1M208 33.5h1M214 33.5h1M220 33.5h2M223 33.5h1M234 33.5h1M238 33.5h1M243 33.5h3M251 33.5h1M19 34.5h2M28 34.5h1M30 34.5h1M44 34.5h2M55 34.5h1M82 34.5h1M96 34.5h1M106 34.5h1M115 34.5h1M146 34.5h1M160 34.5h3M172 34.5h1M182 34.5h2M192 34.5h1M223 34.5h1M240 34.5h1M243 34.5h1M0 35.5h1M3 35.5h1M24 35.5h1M27 35.5h1M29 35.5h1M44 35.5h1M64 35.5h2M73 35.5h1M75 35.5h1M85 35.5h2M125 35.5h2M129 35.5h1M149 35.5h1M180 35.5h1M191 35.5h1M207 35.5h1M247 35.5h1M250 35.5h1M5 36.5h1M100 36.5h1M152 36.5h1M161 36.5h1M177 36.5h2M184 36.5h4M198 36.5h1M208 36.5h1M223 36.5h1M249 36.5h1M255 36.5h1M2 37.5h1M6 37.5h1M9 37.5h1M14 37.5h2M55 37.5h2M64 37.5h1M96 37.5h1M112 37.5h1M124 37.5h4M131 37.5h2M135 37.5h2M145 37.5h1M157 37.5h1M168 37.5h2M191 37.5h2M210 37.5h1M212 37.5h1M19 38.5h2M26 38.5h1M28 38.5h2M31 38.5h1M36 38.5h1M45 38.5h1M82 38.5h1M110 38.5h1M112 38.5h2M138 38.5h1M165 38.5h1M178 38.5h2M186 38.5h1M193 38.5h1M195 38.5h2M199 38.5h1M222 38.5h1M225 38.5h1M233 38.5h1M14 39.5h2M27 39.5h1M41 39.5h2M56 39.5h1M69 39.5h1M77 39.5h1M84 39.5h1M112 39.5h1M115 39.5h2M120 39.5h1M123 39.5h1M139 39.5h1M142 39.5h2M158 39.5h3M172 39.5h1M175 39.5h1M183 39.5h1M188 39.5h1M222 39.5h2M232 39.5h1M237 39.5h1M239 39.5h1M247 39.5h2" stroke="#26a684" stroke-width="1.02" fill="none"/>
<path d="M8 0.5h1M89 0.5h2M196 0.5h1M44 1.5h2M56 1.5h1M171 1.5h1M150 2.5h1M200 2.5h1M8 3.5h2M17 3.5h1M97 3.5h1M122 3.5h1M194 3.5h1M234 3.5h2M29 4.5h2M120 4.5h1M125 4.5h1M171 4.5h1M21 5.5h2M71 5.5h1M147 5.5h1M33 6.5h1M122 6.5h1M225 6.5h1M254 6.5h1M87 7.5h1M105 7.5h1M140 7.5h1M164 7.5h2M211 7.5h2M226 7.5h1M1 8.5h1M81 8.5h1M115 8.5h3M133 8.5h2M137 9.5h1M147 9.5h1M157 9.5h1M252 9.5h1M76 10.5h1M79 10.5h1M131 10.5h1M225 10.5h1M228 10.5h2M245 10.5h2M42 11.5h1M66 11.5h2M23 12.5h2M64 12.5h1M143 12.5h1M8 13.5h1M28 13.5h1M48 13.5h1M120 13.5h1M240 13.5h2M94 14.5h2M193 14.5h1M169 15.5h1M213 15.5h1M61 16.5h1M70 17.5h1M205 17.5h2M233 17.5h1M235 17.5h1M250 17.5h1M72 18.5h1M145 18.5h1M166 19.5h1M198 19.5h1M227 19.5h1M5 20.5h2M55 20.5h1M185 20.5h2M189 20.5h1M41 21.5h1M96 21.5h1M122 21.5h1M132 21.5h2M135 21.5h2M151 21.5h1M170 21.5h2M55 22.5h1M225 22.5h2M41 23.5h1M52 23.5h2M65 23.5h1M83 23.5h2M135 23.5h1M154 23.5h1M32 24.5h1M55 24.5h1M84 24.5h1M106 24.5h1M113 24.5h1M117 24.5h1M175 24.5h1M51 25.5h1M140 25.5h1M11 26.5h1M37 26.5h2M120 26.5h1M193 26.5h2M132 27.5h1M64 28.5h1M121 28.5h1M124 28.5h2M161 28.5h1M38 29.5h1M40 29.5h2M104 29.5h1M117 29.5h2M136 29.5h1M215 29.5h2M62 30.5h1M226 30.5h1M154 31.5h1M223 31.5h1M230 31.5h1M34 32.5h1M163 32.5h1M183 32.5h1M66 33.5h1M124 33.5h1M157 33.5h1M181 33.5h2M222 33.5h1M233 33.5h1M241 33.5h2M81 34.5h1M4 35.5h1M22 35.5h2M28 35.5h1M201 35.5h1M160 36.5h1M156 37.5h1M211 37.5h1M27 38.5h1M116 38.5h1M19 39.5h2M51 39.5h1M103 39.5h1M121 39.5h1M174 39.5h1M231 39.5h1" stroke="#2dae7f" stroke-width="1.02" fill="none"/>
<path d="M96 6.5h1M158 9.5h1M150 21.5h1M50 39.5h1M238 39.5h1" stroke="#34b67a" stroke-width="1.02" fill="none"/>
</g>
<rect x="341.0" y="772.7" width="11.0" height="179.3" fill="#8fd744"/>
<rect x="343.3" y="772.7" width="5.9" height="179.3" fill="#f4e626"/>
<rect x="538.1" y="772.7" width="9.3" height="179.3" fill="#5cc863"/>
<rect x="540.5" y="772.7" width="5.5" height="179.3" fill="#b2dd2d"/>
<text x="436.6" y="753.6" font-size="13" fill="#171717" text-anchor="middle" textLength="143.1" lengthAdjust="spacingAndGlyphs">Wasserfall-Diagramm</text>
<defs><linearGradient id="vg" x1="0" y1="1" x2="0" y2="0"><stop offset="0.0000" stop-color="#440154"/><stop offset="0.1111" stop-color="#482878"/><stop offset="0.2222" stop-color="#3e4989"/><stop offset="0.3333" stop-color="#31688e"/><stop offset="0.4444" stop-color="#26828e"/><stop offset="0.5556" stop-color="#1f9e89"/><stop offset="0.6667" stop-color="#35b779"/><stop offset="0.7778" stop-color="#6ece58"/><stop offset="0.8889" stop-color="#b5de2b"/><stop offset="1.0000" stop-color="#fde725"/></linearGradient></defs>
<rect x="763.5" y="802.7" width="28" height="139.7" fill="url(#vg)" stroke="#3a3a20" stroke-opacity=".6" stroke-width="1.2"/>
<text x="763.3" y="794.4" font-size="13" fill="#181818">dB</text>
<text x="795.6" y="809.0" font-size="10.7" fill="#555">40</text>
<text x="795.6" y="846.9" font-size="10.7" fill="#555">20</text>
<text x="795.6" y="884.1" font-size="10.7" fill="#555">0</text>
<text x="795.6" y="921.4" font-size="10.7" fill="#555">−20</text>
<text x="84.3" y="970.4" font-size="11" fill="#94a3b8" fill-opacity=".72" text-anchor="middle">0</text>
<text x="215.9" y="970.4" font-size="11" fill="#94a3b8" fill-opacity=".72" text-anchor="middle">100</text>
<text x="347.5" y="970.4" font-size="11" fill="#94a3b8" fill-opacity=".72" text-anchor="middle">200</text>
<text x="479.0" y="970.4" font-size="11" fill="#94a3b8" fill-opacity=".72" text-anchor="middle">300</text>
<text x="610.6" y="970.4" font-size="11" fill="#94a3b8" fill-opacity=".72" text-anchor="middle">400</text>
<text x="742.2" y="970.4" font-size="11" fill="#94a3b8" fill-opacity=".72" text-anchor="middle">500</text>
<path d="M83.1 952.2v4M214.7 952.2v4M346.3 952.2v4M477.8 952.2v4M609.4 952.2v4M741.0 952.2v4" stroke="#94a3b8" stroke-opacity=".6" stroke-width="1" fill="none"/>
<text x="412" y="995.3" font-size="13" fill="#94a3b8" fill-opacity=".72" text-anchor="middle" textLength="103" lengthAdjust="spacingAndGlyphs">Frequenz [kHz]</text>
<text transform="translate(53.8 861.6) rotate(-90)" font-size="13" fill="#94a3b8" fill-opacity=".72" text-anchor="middle">Zeit →</text>
</svg>
</body>
</html>
